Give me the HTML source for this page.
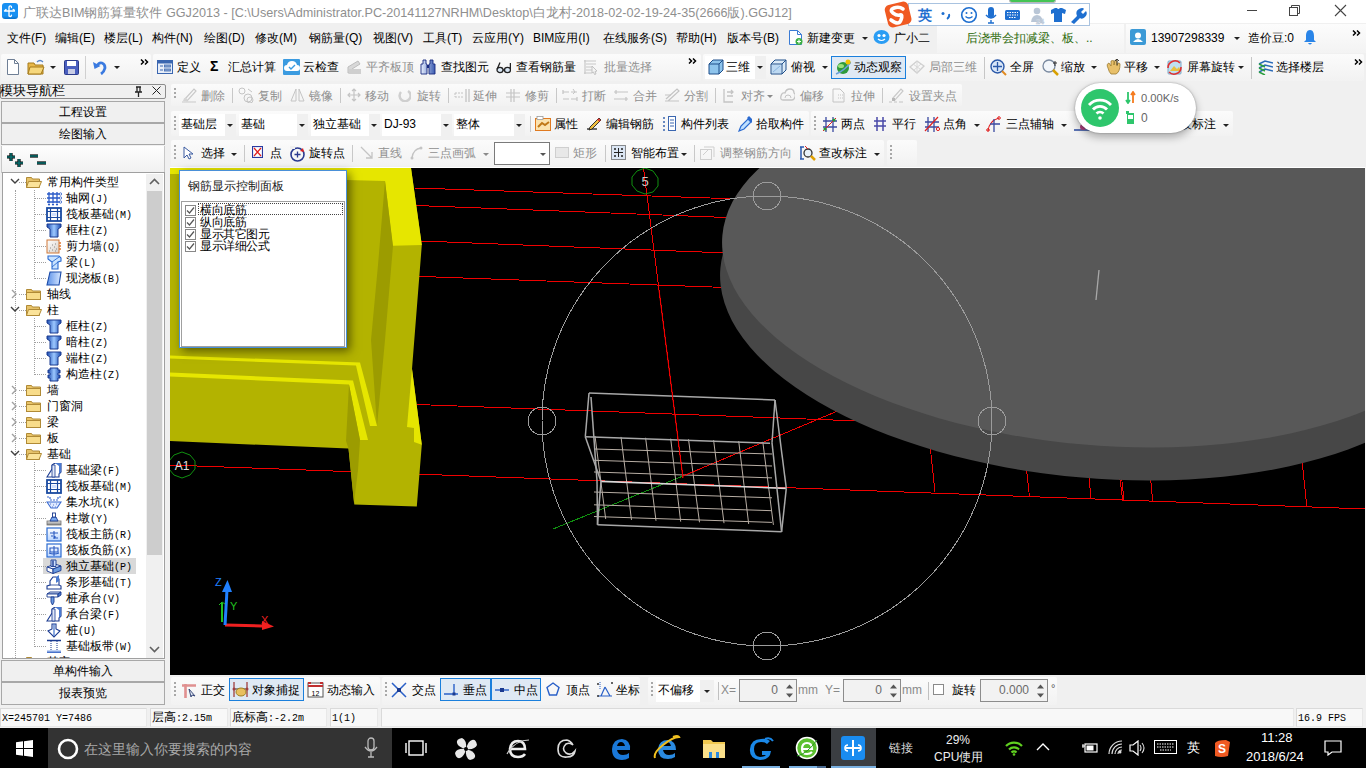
<!DOCTYPE html><html><head><meta charset="utf-8"><style>
*{margin:0;padding:0;box-sizing:border-box}
html,body{width:1366px;height:768px;overflow:hidden;background:#f0f0f0;font-family:"Liberation Sans",sans-serif;font-size:12px;color:#000;position:relative}
.a{position:absolute}
.t{position:absolute;white-space:nowrap;line-height:16px}
.dd{position:absolute;width:0;height:0;border-left:3px solid transparent;border-right:3px solid transparent;border-top:3px solid #222}
.m{font-family:"Liberation Mono",monospace}
</style></head><body>
<div class="a" style="left:0px;top:0px;width:1366px;height:23px;background:#fff"></div>
<div class="a" style="left:2px;top:3px;width:16px;height:16px;background:linear-gradient(#1890f2 80%,#0a6fc8);border-radius:3px"></div>
<svg class="a" style="left:2px;top:3px" width="16" height="16" viewBox="0 0 16 16"><g fill="none" stroke="#fff" stroke-width="1.3" stroke-linecap="round"><path d="M7 3.8v9.2M7 4.5q0-1.6 1.3-1.6t1.2 1.6M7 12q0 1.5 1.2 1.5t1.3-1.3M2.5 8h10M2.5 8l1.5-1.5M12.5 8q0-1.5-1.4-1.6"/></g></svg>
<div class="t " style="left:23px;top:5px;color:#8f8f8f;font-size:12.63px;">广联达BIM钢筋算量软件 GGJ2013 - [C:\Users\Administrator.PC-20141127NRHM\Desktop\白龙村-2018-02-02-19-24-35(2666版).GGJ12]</div>
<div class="a" style="left:1247px;top:10px;width:10px;height:1px;background:#444"></div>
<svg class="a" style="left:1288px;top:4px" width="14" height="14" viewBox="0 0 14 14"><rect x="1.5" y="3.5" width="8" height="8" fill="none" stroke="#444"/><path d="M3.5 3.5v-2h8v8h-2" fill="none" stroke="#444"/></svg>
<svg class="a" style="left:1334px;top:4px" width="13" height="13" viewBox="0 0 13 13"><path d="M1 1L12 12M12 1L1 12" stroke="#444" stroke-width="1.1"/></svg>
<div class="a" style="left:0px;top:23px;width:1366px;height:30px;background:#f0f0f0"></div>
<div class="t " style="left:7px;top:30px;color:#000;font-size:12px;">文件(F)</div>
<div class="t " style="left:55px;top:30px;color:#000;font-size:12px;">编辑(E)</div>
<div class="t " style="left:104px;top:30px;color:#000;font-size:12px;">楼层(L)</div>
<div class="t " style="left:152px;top:30px;color:#000;font-size:12px;">构件(N)</div>
<div class="t " style="left:204px;top:30px;color:#000;font-size:12px;">绘图(D)</div>
<div class="t " style="left:255px;top:30px;color:#000;font-size:12px;">修改(M)</div>
<div class="t " style="left:309px;top:30px;color:#000;font-size:12px;">钢筋量(Q)</div>
<div class="t " style="left:373px;top:30px;color:#000;font-size:12px;">视图(V)</div>
<div class="t " style="left:423px;top:30px;color:#000;font-size:12px;">工具(T)</div>
<div class="t " style="left:472px;top:30px;color:#000;font-size:12px;">云应用(Y)</div>
<div class="t " style="left:533px;top:30px;color:#000;font-size:12px;">BIM应用(I)</div>
<div class="t " style="left:603px;top:30px;color:#000;font-size:12px;">在线服务(S)</div>
<div class="t " style="left:676px;top:30px;color:#000;font-size:12px;">帮助(H)</div>
<div class="t " style="left:727px;top:30px;color:#000;font-size:12px;">版本号(B)</div>
<svg class="a" style="left:788px;top:29px" width="16" height="17" viewBox="0 0 16 17"><path d="M1.5 1.5h8l4 4v10h-12z" fill="#fff" stroke="#3a7bd5"/><path d="M9.5 1.5v4h4" fill="none" stroke="#3a7bd5"/><circle cx="11" cy="12.5" r="3.5" fill="#3cb043"/><path d="M9 12.5h4M11 10.5v4" stroke="#fff" stroke-width="1.2"/></svg>
<div class="t " style="left:807px;top:30px;color:#000;font-size:12px;">新建变更</div>
<div class="dd" style="left:862px;top:37px;border-top-color:#222"></div>
<svg class="a" style="left:873px;top:29px" width="17" height="16" viewBox="0 0 17 16"><ellipse cx="8.5" cy="8" rx="8" ry="7" fill="#2a9df4"/><circle cx="6" cy="6.5" r="1.6" fill="#fff"/><circle cx="11" cy="6.5" r="1.6" fill="#fff"/><path d="M5 10q3.5 3 7 0" stroke="#fff" fill="none" stroke-width="1.2"/></svg>
<div class="t " style="left:894px;top:30px;color:#000;font-size:12px;">广小二</div>
<div class="a" style="left:937px;top:24px;width:187px;height:29px;background:linear-gradient(#fcfcfc,#f3f3f3)"></div>
<div class="t " style="left:966px;top:30px;color:#2e6b0b;font-size:12px;">后浇带会扣减梁、板、..</div>
<div class="a" style="left:1126px;top:24px;width:240px;height:29px;background:linear-gradient(#fcfcfc,#f3f3f3)"></div>
<svg class="a" style="left:1130px;top:29px" width="16" height="16" viewBox="0 0 16 16"><rect width="16" height="16" rx="2" fill="#3c9ad6"/><circle cx="8" cy="6.5" r="3" fill="#fff"/><path d="M3 13q5-6 10 0z" fill="#fff"/></svg>
<div class="t " style="left:1151px;top:30px;color:#000;font-size:12px;">13907298339</div>
<div class="dd" style="left:1234px;top:37px;border-top-color:#222"></div>
<div class="t " style="left:1248px;top:30px;color:#000;font-size:12px;">造价豆:0</div>
<svg class="a" style="left:1303px;top:29px" width="14" height="17" viewBox="0 0 14 17"><path d="M7 1c-3 0-4 3-4 6v4l-2 2h12l-2-2v-4c0-3-1-6-4-6z" fill="#2a85e8"/><path d="M5 14q2 3 4 0" fill="#2a85e8"/></svg>
<svg class="a" style="left:1352px;top:30px" width="9" height="6" viewBox="0 0 9 6"><path d="M1 .5l2.5 2.5L1 5.5M5 .5l2.5 2.5L5 5.5" fill="none" stroke="#000" stroke-width="1.5"/></svg>
<div class="a" style="left:1009px;top:0px;width:47px;height:3px;background:#44c454;border:1px solid #b8b8b8;border-top:none;border-radius:0 0 6px 6px"></div>
<div class="a" style="left:908px;top:3px;width:182px;height:23px;background:#fff;border:1px solid #a9c3e0"></div>
<svg class="a" style="left:882px;top:0px" width="32" height="28" viewBox="0 0 32 28"><g transform="rotate(-14 16 14)"><rect x="4" y="3" width="24" height="23" rx="5" fill="#f05a22"/></g><path d="M21 9q-4-3-9-1t-1 5 7 2 1 5-10 0" fill="none" stroke="#fff" stroke-width="3.6" stroke-linecap="round"/></svg>
<svg class="a" style="left:916px;top:5px" width="174" height="20" viewBox="0 0 174 20"><text x="2" y="15" font-size="14" font-weight="bold" fill="#1e6fd0" font-family="Liberation Sans">英</text><circle cx="27" cy="8.5" r="1.5" fill="#1e6fd0"/><path d="M33 9q1 3-2 5" stroke="#1e6fd0" stroke-width="1.8" fill="none"/><circle cx="53" cy="10" r="7.3" fill="none" stroke="#1e6fd0" stroke-width="1.6"/><circle cx="50.5" cy="8" r="1" fill="#1e6fd0"/><circle cx="55.5" cy="8" r="1" fill="#1e6fd0"/><path d="M49.5 11.5q3.5 3 7 0" stroke="#1e6fd0" fill="none" stroke-width="1.3"/><rect x="72" y="2" width="6" height="11" rx="3" fill="#1e6fd0"/><path d="M70 10q5 6 10 0M75 15v3M72 18h6" stroke="#1e6fd0" fill="none" stroke-width="1.4"/><rect x="89" y="5" width="15" height="10" rx="1.5" fill="#1e6fd0"/><path d="M91 7.5h11M91 10h11M93 12.5h7" stroke="#fff" stroke-width="1" stroke-dasharray="1.5 1"/><circle cx="121" cy="6" r="3.3" fill="#b9c6d6"/><path d="M115 17q1-7 6-7t6 7z" fill="#b9c6d6"/><text x="120" y="19" font-size="7" font-weight="bold" fill="#fff" stroke="#b9c6d6" stroke-width=".6" font-family="Liberation Sans">24</text><path d="M135 5l4-2h2q1 2 3 0h2l4 2-1 4-3-1v9h-8v-9l-3 1z" fill="#1e6fd0"/><path d="M155 17l6-6q-2-5 2-7t5 0l-3 3 2 2 3-3q2 3-1 6t-5 1l-6 6z" fill="#1e6fd0"/></svg>
<div class="a" style="left:1px;top:54px;width:150px;height:27px;background:linear-gradient(#fbfbfb,#f2f2f2);border-radius:2px"></div>
<svg class="a" style="left:6px;top:59px" width="14" height="16" viewBox="0 0 14 16"><path d="M1.5 .5h7l4 4v11h-11z" fill="#fff" stroke="#6f7f95"/><path d="M8.5 .5v4h4" fill="none" stroke="#6f7f95"/></svg>
<svg class="a" style="left:27px;top:59px" width="18" height="16" viewBox="0 0 18 16"><path d="M1 4h6l1 2h8v9H1z" fill="#e8b84a" stroke="#a57b1c"/><path d="M3 8h14l-3 7H1z" fill="#f6d77c" stroke="#a57b1c"/><path d="M10 3q3-3 6 0" stroke="#5a86c8" fill="none" stroke-width="1.3"/></svg>
<div class="dd" style="left:50px;top:66px;border-top-color:#222"></div>
<svg class="a" style="left:64px;top:60px" width="15" height="15" viewBox="0 0 15 15"><rect x=".5" y=".5" width="14" height="14" rx="1" fill="#4a5fbf" stroke="#2b3a8a"/><rect x="3" y="1" width="9" height="5" fill="#fff"/><rect x="4" y="9" width="7" height="5" fill="#c9cde5"/></svg>
<div class="a" style="left:85px;top:56px;width:1px;height:23px;background:#d0d0d0"></div>
<svg class="a" style="left:92px;top:59px" width="15" height="16" viewBox="0 0 15 16"><path d="M5 7q2-4 5-3t3 5q-1 4-4 6" fill="none" stroke="#3a7ae0" stroke-width="2.8"/><path d="M1 3l1.5 7 6-3z" fill="#3a7ae0"/></svg>
<div class="dd" style="left:114px;top:66px;border-top-color:#222"></div>
<svg class="a" style="left:140px;top:59px" width="9" height="6" viewBox="0 0 9 6"><path d="M1 .5l2.5 2.5L1 5.5M5 .5l2.5 2.5L5 5.5" fill="none" stroke="#000" stroke-width="1.5"/></svg>
<div class="a" style="left:153px;top:54px;width:548px;height:27px;background:linear-gradient(#fbfbfb,#f2f2f2);border-radius:2px"></div>
<svg class="a" style="left:157px;top:60px" width="16" height="14" viewBox="0 0 16 14"><rect x=".5" y=".5" width="15" height="13" fill="#e8eef8" stroke="#3a66b0"/><rect x=".5" y=".5" width="15" height="3" fill="#3a66b0"/><path d="M3 6h3M3 10h3M8 6h5M8 10h5" stroke="#3a66b0"/><rect x="7.5" y="5" width="6" height="2" fill="none" stroke="#3a66b0" stroke-width=".8"/><rect x="7.5" y="9" width="6" height="2" fill="none" stroke="#3a66b0" stroke-width=".8"/></svg>
<div class="t " style="left:177px;top:59px;color:#000;font-size:12px;">定义</div>
<div class="t " style="left:210px;top:58px;color:#000;font-size:14px;font-weight:bold">Σ</div>
<div class="t " style="left:228px;top:59px;color:#000;font-size:12px;">汇总计算</div>
<svg class="a" style="left:283px;top:59px" width="17" height="16" viewBox="0 0 17 16"><rect width="17" height="16" rx="1" fill="#3b9be0"/><path d="M4 12q-3 0-3-3t3-3q1-4 5-4t5 4q3 0 3 3t-3 3z" fill="#fff"/><path d="M6 8l2 2 4-4" stroke="#3b9be0" fill="none" stroke-width="1.4"/></svg>
<div class="t " style="left:303px;top:59px;color:#000;font-size:12px;">云检查</div>
<svg class="a" style="left:346px;top:59px" width="16" height="16" viewBox="0 0 16 16"><path d="M2 14V8l10-6 2 3-8 5v4z" fill="#d8d8d8" stroke="#bdbdbd"/><rect x="3" y="10" width="12" height="5" fill="#cfcfcf"/></svg>
<div class="t " style="left:366px;top:59px;color:#8f8f8f;font-size:12px;">平齐板顶</div>
<svg class="a" style="left:420px;top:59px" width="16" height="16" viewBox="0 0 16 16"><defs><linearGradient id="bn" x1="0" x2="1"><stop offset="0" stop-color="#e8f0ff"/><stop offset="1" stop-color="#3a5ab0"/></linearGradient></defs><path d="M3 1h3v4h1v10H1V5h2zM10 1h3v4h2v10H9V5h1z" fill="url(#bn)" stroke="#1a2a80" stroke-width=".9"/><rect x="7" y="6" width="2" height="3" fill="#1a2a80"/></svg>
<div class="t " style="left:441px;top:59px;color:#000;font-size:12px;">查找图元</div>
<svg class="a" style="left:496px;top:60px" width="15" height="14" viewBox="0 0 15 14"><ellipse cx="4" cy="10" rx="3" ry="2.6" fill="#d8e6f4" stroke="#222" stroke-width="1.3"/><ellipse cx="11.5" cy="10" rx="3" ry="2.6" fill="#d8e6f4" stroke="#222" stroke-width="1.3"/><path d="M7 10h1.5M1.2 9L4 2.5M14.4 9V3" fill="none" stroke="#222" stroke-width="1.3"/></svg>
<div class="t " style="left:516px;top:59px;color:#000;font-size:12px;">查看钢筋量</div>
<svg class="a" style="left:583px;top:59px" width="16" height="16" viewBox="0 0 16 16"><path d="M1 2h12M3 5h10M3 8h6M3 11h6M1 14h8M2 1v14" stroke="#c8c8c8" stroke-width="1.2"/><path d="M9 7l5 5-2 .5 1 2.5-1.5.5-1-2.5L9 14z" fill="#f4f4f4" stroke="#bdbdbd" stroke-width=".9"/></svg>
<div class="t " style="left:604px;top:59px;color:#8f8f8f;font-size:12px;">批量选择</div>
<svg class="a" style="left:688px;top:58px" width="9" height="6" viewBox="0 0 9 6"><path d="M1 .5l2.5 2.5L1 5.5M5 .5l2.5 2.5L5 5.5" fill="none" stroke="#000" stroke-width="1.5"/></svg>
<div class="a" style="left:703px;top:54px;width:661px;height:27px;background:linear-gradient(#fbfbfb,#f2f2f2);border-radius:2px"></div>
<div class="a" style="left:705px;top:56px;width:61px;height:23px;background:#fff"></div>
<div class="a" style="left:755px;top:56px;width:11px;height:23px;background:#f0f0f0"></div>
<svg class="a" style="left:708px;top:59px" width="16" height="16" viewBox="0 0 16 16"><path d="M1 5l4-4h10v10l-4 4H1z" fill="#8ec4ec" stroke="#1f4f8a"/><path d="M1 5h10v10M11 5l4-4" fill="none" stroke="#1f4f8a"/></svg>
<div class="t " style="left:726px;top:59px;color:#000;font-size:12px;">三维</div>
<div class="dd" style="left:757px;top:66px;border-top-color:#222"></div>
<svg class="a" style="left:770px;top:59px" width="17" height="16" viewBox="0 0 17 16"><path d="M1 5l4-4h11v10l-4 4H1z" fill="#dbeaf7" stroke="#1f4f8a"/><path d="M1 5h11v10M12 5l4-4" fill="none" stroke="#1f4f8a"/><path d="M3 13l7-6" stroke="#5b8fc7"/><rect x="2" y="6" width="9" height="8" fill="#a9cdee" opacity=".6"/></svg>
<div class="t " style="left:791px;top:59px;color:#000;font-size:12px;">俯视</div>
<div class="dd" style="left:822px;top:66px;border-top-color:#222"></div>
<div class="a" style="left:831px;top:56px;width:75px;height:23px;background:#dfe9f4;border:1px solid #1a7fdc"></div>
<svg class="a" style="left:835px;top:59px" width="16" height="16" viewBox="0 0 16 16"><ellipse cx="8" cy="9" rx="6" ry="6" fill="#2e9a3a"/><ellipse cx="6" cy="7" rx="3" ry="2" fill="#9de07a"/><path d="M1 15q8-3 15-12" stroke="#6aa0d8" stroke-width="1.5" fill="none"/><circle cx="13" cy="3" r="2.5" fill="#f2c200"/></svg>
<div class="t " style="left:854px;top:59px;color:#000;font-size:12px;">动态观察</div>
<svg class="a" style="left:909px;top:59px" width="16" height="16" viewBox="0 0 16 16"><path d="M1 8l7-6 7 5-7 7z" fill="none" stroke="#cfcfcf" stroke-width="1.3"/><path d="M4 5l7 5M8 2v12M12 5l-7 6" stroke="#d8d8d8"/></svg>
<div class="t " style="left:929px;top:59px;color:#8f8f8f;font-size:12px;">局部三维</div>
<div class="a" style="left:984px;top:57px;width:1px;height:22px;background:#c6c6c6"></div>
<svg class="a" style="left:990px;top:59px" width="17" height="17" viewBox="0 0 17 17"><circle cx="7.5" cy="7.5" r="6.5" fill="#d8e6f8" stroke="#2a58a8" stroke-width="1.4"/><path d="M7.5 3v9M3 7.5h9" stroke="#2a58a8" stroke-width="1.3"/><path d="M12 12l4 4" stroke="#e08a20" stroke-width="2"/></svg>
<div class="t " style="left:1010px;top:59px;color:#000;font-size:12px;">全屏</div>
<svg class="a" style="left:1042px;top:59px" width="17" height="17" viewBox="0 0 17 17"><circle cx="7" cy="7" r="6" fill="#f2f6fb" stroke="#7a8aa0" stroke-width="1.3"/><path d="M11 11l5 5" stroke="#d8a000" stroke-width="2.5"/><path d="M13 2v5M11 4h4" stroke="#333"/></svg>
<div class="t " style="left:1061px;top:59px;color:#000;font-size:12px;">缩放</div>
<div class="dd" style="left:1091px;top:66px;border-top-color:#222"></div>
<svg class="a" style="left:1105px;top:58px" width="16" height="18" viewBox="0 0 16 18"><path d="M3 10q-2-4 1-5l2 3V3q2-1 3 0v4l1-5q2 0 2 1v5l1-3q2 0 2 1q0 8-4 10H6q-2-2-3-6z" fill="#e8c06a" stroke="#9a7a30" stroke-width=".8"/><path d="M12 1v6M10 3l2-2 2 2" stroke="#333" stroke-width=".9" fill="none"/></svg>
<div class="t " style="left:1124px;top:59px;color:#000;font-size:12px;">平移</div>
<div class="dd" style="left:1154px;top:66px;border-top-color:#222"></div>
<svg class="a" style="left:1166px;top:59px" width="17" height="17" viewBox="0 0 17 17"><rect x="2" y="2" width="13" height="13" rx="1" fill="#bfe0f0" stroke="#7aa8c8"/><path d="M4 12l4-5 3 3 2-2 2 4z" fill="#e8c040"/><path d="M2 9a7 7 0 0 1 12-5M15 8a7 7 0 0 1-12 5" fill="none" stroke="#e03030" stroke-width="1.6"/></svg>
<div class="t " style="left:1187px;top:59px;color:#000;font-size:12px;">屏幕旋转</div>
<div class="dd" style="left:1238px;top:66px;border-top-color:#222"></div>
<div class="a" style="left:1251px;top:57px;width:1px;height:22px;background:#c6c6c6"></div>
<svg class="a" style="left:1258px;top:60px" width="15" height="15" viewBox="0 0 15 15"><path d="M1 4l6-3 8 2M1 8l6-3 8 2M1 12l6-3 8 2" fill="none" stroke="#2a6ab8" stroke-width="1.6"/><path d="M1 4l6 3M1 8l6 3M1 12l6 3" stroke="#2ea040" stroke-width="1.6"/></svg>
<div class="t " style="left:1276px;top:59px;color:#000;font-size:12px;">选择楼层</div>
<svg class="a" style="left:1354px;top:59px" width="9" height="6" viewBox="0 0 9 6"><path d="M1 .5l2.5 2.5L1 5.5M5 .5l2.5 2.5L5 5.5" fill="none" stroke="#000" stroke-width="1.5"/></svg>
<div class="a" style="left:171px;top:84px;width:791px;height:22px;background:linear-gradient(#fbfbfb,#f2f2f2);border-radius:2px"></div>
<div class="a" style="left:174px;top:88px;width:2px;height:2px;background:#a8a8a8"></div>
<div class="a" style="left:174px;top:92px;width:2px;height:2px;background:#a8a8a8"></div>
<div class="a" style="left:174px;top:96px;width:2px;height:2px;background:#a8a8a8"></div>
<svg class="a" style="left:181px;top:87px" width="16" height="16" viewBox="0 0 16 16"><path d="M4 12l9-10 2 2-9 10z" fill="none" stroke="#c9c9c9" stroke-width="1.2"/><path d="M1 15h14" stroke="#c9c9c9"/><path d="M2 14q1-4 3-3l2 2q-1 2-5 1z" fill="#d5d5d5"/></svg>
<div class="t " style="left:201px;top:88px;color:#8f8f8f;font-size:12px;">删除</div>
<div class="a" style="left:232px;top:88px;width:1px;height:15px;background:#c8c8c8"></div>
<svg class="a" style="left:238px;top:87px" width="16" height="16" viewBox="0 0 16 16"><circle cx="4" cy="4" r="3" fill="none" stroke="#c4c4c4"/><circle cx="10" cy="11" r="4" fill="none" stroke="#c4c4c4"/><circle cx="12" cy="13" r="3" fill="none" stroke="#c4c4c4"/><path d="M10 2l4 3" stroke="#c4c4c4"/></svg>
<div class="t " style="left:258px;top:88px;color:#8f8f8f;font-size:12px;">复制</div>
<svg class="a" style="left:290px;top:87px" width="15" height="16" viewBox="0 0 15 16"><path d="M6 2L1 14h5zM9 2l5 12H9z" fill="none" stroke="#c4c4c4"/></svg>
<div class="t " style="left:309px;top:88px;color:#8f8f8f;font-size:12px;">镜像</div>
<div class="a" style="left:340px;top:88px;width:1px;height:15px;background:#c8c8c8"></div>
<svg class="a" style="left:347px;top:88px" width="14" height="14" viewBox="0 0 14 14"><path d="M7 1v12M1 7h12M5 3l2-2 2 2M5 11l2 2 2-2M3 5L1 7l2 2M11 5l2 2-2 2" fill="none" stroke="#c4c4c4" stroke-width="1.2"/></svg>
<div class="t " style="left:365px;top:88px;color:#8f8f8f;font-size:12px;">移动</div>
<svg class="a" style="left:398px;top:88px" width="13" height="14" viewBox="0 0 13 14"><path d="M10 3a5.5 5.5 0 1 1-7 1" fill="none" stroke="#cfcfcf" stroke-width="2.5"/></svg>
<div class="t " style="left:417px;top:88px;color:#8f8f8f;font-size:12px;">旋转</div>
<div class="a" style="left:448px;top:88px;width:1px;height:15px;background:#c8c8c8"></div>
<svg class="a" style="left:454px;top:88px" width="16" height="14" viewBox="0 0 16 14"><path d="M1 5h8M1 9h8M1 5v4" stroke="#c4c4c4" stroke-dasharray="2 1"/><path d="M12 1v13M15 1v13" stroke="#c4c4c4" stroke-width="1.3"/></svg>
<div class="t " style="left:473px;top:88px;color:#8f8f8f;font-size:12px;">延伸</div>
<svg class="a" style="left:505px;top:88px" width="16" height="14" viewBox="0 0 16 14"><path d="M6 1v13M9 1v13M1 5h14M1 9h14" stroke="#c4c4c4" stroke-width="1.2"/></svg>
<div class="t " style="left:525px;top:88px;color:#8f8f8f;font-size:12px;">修剪</div>
<div class="a" style="left:556px;top:88px;width:1px;height:15px;background:#c8c8c8"></div>
<svg class="a" style="left:562px;top:88px" width="16" height="14" viewBox="0 0 16 14"><path d="M1 4h6M9 4h6M1 11h6M9 11h6M1 2v4M15 9v4" stroke="#c4c4c4" stroke-width="1.2"/><path d="M11 1l2 3-2 2" stroke="#c4c4c4" fill="none"/></svg>
<div class="t " style="left:582px;top:88px;color:#8f8f8f;font-size:12px;">打断</div>
<svg class="a" style="left:613px;top:88px" width="16" height="14" viewBox="0 0 16 14"><path d="M1 4h14M1 11h14M3 2v4M13 9v4" stroke="#c4c4c4" stroke-width="1.2"/></svg>
<div class="t " style="left:633px;top:88px;color:#8f8f8f;font-size:12px;">合并</div>
<svg class="a" style="left:664px;top:87px" width="16" height="16" viewBox="0 0 16 16"><path d="M1 14h14M2 12l11-10 2 2-11 10" fill="none" stroke="#c4c4c4" stroke-width="1.2"/><path d="M1 8h6" stroke="#c4c4c4"/></svg>
<div class="t " style="left:684px;top:88px;color:#8f8f8f;font-size:12px;">分割</div>
<div class="a" style="left:715px;top:88px;width:1px;height:15px;background:#c8c8c8"></div>
<svg class="a" style="left:722px;top:88px" width="12" height="15" viewBox="0 0 12 15"><path d="M2 1v13h9M5 4h6M5 8h6M9 2l2 2-2 2" fill="none" stroke="#c4c4c4" stroke-width="1.3"/></svg>
<div class="t " style="left:741px;top:88px;color:#8f8f8f;font-size:12px;">对齐</div>
<div class="dd" style="left:767px;top:95px;border-top-color:#8a8a8a"></div>
<svg class="a" style="left:780px;top:88px" width="15" height="14" viewBox="0 0 15 14"><path d="M3 12q-3 0-2-4t4-3q1-4 5-4t4 4q2 1 1 4t-3 3z" fill="none" stroke="#c4c4c4" stroke-width="1.3"/><path d="M5 10q0-3 3-3t3 3" fill="none" stroke="#c4c4c4"/></svg>
<div class="t " style="left:800px;top:88px;color:#8f8f8f;font-size:12px;">偏移</div>
<svg class="a" style="left:832px;top:88px" width="14" height="15" viewBox="0 0 14 15"><path d="M1 1h7l4 4v9H1z" fill="none" stroke="#c4c4c4"/><path d="M6 7h5M6 10h5" stroke="#c4c4c4" stroke-dasharray="1 1"/></svg>
<div class="t " style="left:851px;top:88px;color:#8f8f8f;font-size:12px;">拉伸</div>
<div class="a" style="left:882px;top:88px;width:1px;height:15px;background:#c8c8c8"></div>
<svg class="a" style="left:888px;top:87px" width="16" height="16" viewBox="0 0 16 16"><path d="M5 11l8-9 2 2-8 9z" fill="none" stroke="#c9c9c9" stroke-width="1.2"/><path d="M1 15h3M6 15h3M11 15h4" stroke="#c4c4c4"/><rect x="4" y="11" width="3" height="3" fill="#b8b8b8"/></svg>
<div class="t " style="left:909px;top:88px;color:#8f8f8f;font-size:12px;">设置夹点</div>
<div class="a" style="left:171px;top:111px;width:638px;height:25px;background:linear-gradient(#fbfbfb,#f2f2f2);border-radius:2px"></div>
<div class="a" style="left:174px;top:116px;width:2px;height:2px;background:#a8a8a8"></div>
<div class="a" style="left:174px;top:120px;width:2px;height:2px;background:#a8a8a8"></div>
<div class="a" style="left:174px;top:124px;width:2px;height:2px;background:#a8a8a8"></div>
<div class="a" style="left:174px;top:128px;width:2px;height:2px;background:#a8a8a8"></div>
<div class="a" style="left:179px;top:114px;width:57px;height:22px;background:#fff"></div>
<div class="a" style="left:225px;top:114px;width:11px;height:22px;background:#f0f0f0"></div>
<div class="t " style="left:181px;top:116px;color:#000;font-size:12px;">基础层</div>
<div class="dd" style="left:227px;top:124px;border-top-color:#222"></div>
<div class="a" style="left:239px;top:114px;width:69px;height:22px;background:#fff"></div>
<div class="a" style="left:297px;top:114px;width:11px;height:22px;background:#f0f0f0"></div>
<div class="t " style="left:241px;top:116px;color:#000;font-size:12px;">基础</div>
<div class="dd" style="left:299px;top:124px;border-top-color:#222"></div>
<div class="a" style="left:311px;top:114px;width:69px;height:22px;background:#fff"></div>
<div class="a" style="left:369px;top:114px;width:11px;height:22px;background:#f0f0f0"></div>
<div class="t " style="left:313px;top:116px;color:#000;font-size:12px;">独立基础</div>
<div class="dd" style="left:371px;top:124px;border-top-color:#222"></div>
<div class="a" style="left:382px;top:114px;width:70px;height:22px;background:#fff"></div>
<div class="a" style="left:441px;top:114px;width:11px;height:22px;background:#f0f0f0"></div>
<div class="t " style="left:384px;top:116px;color:#000;font-size:12px;">DJ-93</div>
<div class="dd" style="left:443px;top:124px;border-top-color:#222"></div>
<div class="a" style="left:454px;top:114px;width:71px;height:22px;background:#fff"></div>
<div class="a" style="left:514px;top:114px;width:11px;height:22px;background:#f0f0f0"></div>
<div class="t " style="left:456px;top:116px;color:#000;font-size:12px;">整体</div>
<div class="dd" style="left:516px;top:124px;border-top-color:#222"></div>
<div class="a" style="left:530px;top:116px;width:1px;height:16px;background:#c8c8c8"></div>
<svg class="a" style="left:535px;top:116px" width="16" height="15" viewBox="0 0 16 15"><rect x=".5" y="2.5" width="15" height="12" fill="#fbe3b0" stroke="#e07a20"/><rect x="2" y=".5" width="6" height="3" fill="#fff" stroke="#999" stroke-width=".8"/><path d="M3 11l4-4 3 2 4-3" stroke="#c07818" stroke-width="2" fill="none"/></svg>
<div class="t " style="left:554px;top:116px;color:#000;font-size:12px;">属性</div>
<svg class="a" style="left:586px;top:116px" width="16" height="15" viewBox="0 0 16 15"><path d="M1 13h10" stroke="#222" stroke-width="1.3"/><path d="M4 11l9-9 2 2-9 9-3 1z" fill="#f2c040" stroke="#222" stroke-width=".9"/><path d="M12 3l2 2" stroke="#e03030" stroke-width="2"/></svg>
<div class="t " style="left:606px;top:116px;color:#000;font-size:12px;">编辑钢筋</div>
<svg class="a" style="left:662px;top:116px" width="14" height="15" viewBox="0 0 14 15"><path d="M1 2h2M1 6h2M1 10h2M1 14h2" stroke="#3a66b0" stroke-width="1.5"/><rect x="6.5" y=".5" width="7" height="14" fill="#fff" stroke="#3a66b0"/><path d="M8 4h4M8 7h4M8 10h4" stroke="#3a66b0"/></svg>
<div class="t " style="left:681px;top:116px;color:#000;font-size:12px;">构件列表</div>
<svg class="a" style="left:738px;top:116px" width="14" height="16" viewBox="0 0 14 16"><path d="M1 15l2-5 7-7 3 3-7 7z" fill="#bfe0ff" stroke="#2a6ad0" stroke-width="1.2"/><path d="M9 2l2-2 5 5-2 2" fill="#2a6ad0"/></svg>
<div class="t " style="left:756px;top:116px;color:#000;font-size:12px;">拾取构件</div>
<div class="a" style="left:811px;top:111px;width:422px;height:25px;background:linear-gradient(#fbfbfb,#f2f2f2);border-radius:2px"></div>
<div class="a" style="left:814px;top:116px;width:2px;height:2px;background:#a8a8a8"></div>
<div class="a" style="left:814px;top:120px;width:2px;height:2px;background:#a8a8a8"></div>
<div class="a" style="left:814px;top:124px;width:2px;height:2px;background:#a8a8a8"></div>
<div class="a" style="left:814px;top:128px;width:2px;height:2px;background:#a8a8a8"></div>
<svg class="a" style="left:822px;top:116px" width="15" height="16" viewBox="0 0 15 16"><path d="M4 1v15M11 1v15M1 5h14M1 11h14" stroke="#3a4aa0" stroke-width="1.3"/><path d="M1 15L14 2" stroke="#e02020"/><circle cx="3" cy="13" r="1.6" fill="#2a9a30"/><circle cx="12" cy="4" r="1.6" fill="#2a9a30"/></svg>
<div class="t " style="left:841px;top:116px;color:#000;font-size:12px;">两点</div>
<svg class="a" style="left:873px;top:116px" width="14" height="15" viewBox="0 0 14 15"><path d="M4 1v14M10 1v14M1 5h12M1 10h12" stroke="#4a4aa8" stroke-width="1.5"/></svg>
<div class="t " style="left:892px;top:116px;color:#000;font-size:12px;">平行</div>
<svg class="a" style="left:924px;top:116px" width="16" height="16" viewBox="0 0 16 16"><path d="M4 1v15M10 1v15M1 6h14M1 11h14" stroke="#3a4aa0" stroke-width="1.3"/><path d="M1 15L14 1" stroke="#e02020" stroke-width="1.2"/><circle cx="14" cy="13" r="1.6" fill="none" stroke="#e02020"/></svg>
<div class="t " style="left:943px;top:116px;color:#000;font-size:12px;">点角</div>
<div class="dd" style="left:974px;top:124px;border-top-color:#222"></div>
<svg class="a" style="left:986px;top:116px" width="15" height="16" viewBox="0 0 15 16"><path d="M2 15q1-10 11-13" fill="none" stroke="#e02020" stroke-width="1.2"/><path d="M8 3v13M4 8h10" stroke="#3a4aa0" stroke-width="1.3"/><circle cx="2" cy="14" r="1.3" fill="none" stroke="#e02020"/><circle cx="13" cy="2" r="1.3" fill="none" stroke="#e02020"/></svg>
<div class="t " style="left:1006px;top:116px;color:#000;font-size:12px;">三点辅轴</div>
<div class="dd" style="left:1061px;top:124px;border-top-color:#222"></div>
<svg class="a" style="left:1073px;top:118px" width="20" height="14" viewBox="0 0 20 14"><path d="M1 12h16" stroke="#2a4aa0" stroke-width="1.5"/><circle cx="10" cy="9" r="3" fill="#b04080"/></svg>
<div class="t " style="left:1180px;top:116px;color:#000;font-size:12px;">改标注</div>
<div class="dd" style="left:1223px;top:124px;border-top-color:#222"></div>
<div class="a" style="left:171px;top:140px;width:713px;height:26px;background:linear-gradient(#fbfbfb,#f2f2f2);border-radius:2px"></div>
<div class="a" style="left:174px;top:145px;width:2px;height:2px;background:#a8a8a8"></div>
<div class="a" style="left:174px;top:149px;width:2px;height:2px;background:#a8a8a8"></div>
<div class="a" style="left:174px;top:153px;width:2px;height:2px;background:#a8a8a8"></div>
<div class="a" style="left:174px;top:157px;width:2px;height:2px;background:#a8a8a8"></div>
<svg class="a" style="left:183px;top:146px" width="10" height="14" viewBox="0 0 10 14"><path d="M1 1v11l3-3 2 4 2-1-2-4h4z" fill="#fff" stroke="#3a5aa0"/></svg>
<div class="t " style="left:201px;top:145px;color:#000;font-size:12px;">选择</div>
<div class="dd" style="left:231px;top:153px;border-top-color:#222"></div>
<div class="a" style="left:244px;top:145px;width:1px;height:17px;background:#c8c8c8"></div>
<svg class="a" style="left:252px;top:146px" width="11" height="12" viewBox="0 0 11 12"><rect x=".5" y=".5" width="10" height="11" fill="#fff" stroke="#2a3aa0" stroke-width="1.2"/><path d="M2 2l7 8M9 2l-7 8" stroke="#e02020" stroke-width="1.2"/></svg>
<div class="t " style="left:270px;top:145px;color:#000;font-size:12px;">点</div>
<svg class="a" style="left:289px;top:145px" width="17" height="17" viewBox="0 0 17 17"><circle cx="8.5" cy="9.5" r="6.5" fill="none" stroke="#2a3a90" stroke-width="1.6"/><path d="M8.5 6.5v6M5.5 9.5h6" stroke="#2a3a90" stroke-width="1.3"/><path d="M14 3l1 4-4-1" fill="#e02020"/><rect x="1" y="1" width="5" height="3" fill="#f0f0f0"/></svg>
<div class="t " style="left:309px;top:145px;color:#000;font-size:12px;">旋转点</div>
<div class="a" style="left:352px;top:145px;width:1px;height:17px;background:#c8c8c8"></div>
<svg class="a" style="left:360px;top:146px" width="13" height="13" viewBox="0 0 13 13"><path d="M1 1l11 11M12 6v6H6" fill="none" stroke="#c4c4c4" stroke-width="1.3"/></svg>
<div class="t " style="left:378px;top:145px;color:#8f8f8f;font-size:12px;">直线</div>
<svg class="a" style="left:410px;top:146px" width="13" height="14" viewBox="0 0 13 14"><path d="M2 12q1-9 9-10" fill="none" stroke="#c4c4c4" stroke-width="1.3"/><circle cx="2" cy="12" r="1.5" fill="#c4c4c4"/><circle cx="11" cy="2" r="1.5" fill="#c4c4c4"/></svg>
<div class="t " style="left:428px;top:145px;color:#8f8f8f;font-size:12px;">三点画弧</div>
<div class="dd" style="left:483px;top:153px;border-top-color:#8a8a8a"></div>
<div class="a" style="left:494px;top:142px;width:56px;height:23px;background:#fff;border:1px solid #7a7a7a"></div>
<div class="dd" style="left:540px;top:153px;border-top-color:#555"></div>
<svg class="a" style="left:555px;top:147px" width="14" height="11" viewBox="0 0 14 11"><rect x=".5" y=".5" width="13" height="10" fill="#e8e8e8" stroke="#cfcfcf"/></svg>
<div class="t " style="left:573px;top:145px;color:#8f8f8f;font-size:12px;">矩形</div>
<div class="a" style="left:605px;top:145px;width:1px;height:17px;background:#c8c8c8"></div>
<svg class="a" style="left:611px;top:145px" width="15" height="15" viewBox="0 0 15 15"><rect x=".5" y=".5" width="14" height="14" fill="#dbe6f4" stroke="#222" stroke-dasharray="1 1"/><path d="M7.5 3v9M3 7.5h9" stroke="#222"/><circle cx="4" cy="4" r="1" fill="#222"/><circle cx="11" cy="11" r="1" fill="#222"/><circle cx="11" cy="4" r="1" fill="#222"/><circle cx="4" cy="11" r="1" fill="#222"/></svg>
<div class="t " style="left:631px;top:145px;color:#000;font-size:12px;">智能布置</div>
<div class="dd" style="left:681px;top:153px;border-top-color:#222"></div>
<div class="a" style="left:694px;top:145px;width:1px;height:17px;background:#c8c8c8"></div>
<svg class="a" style="left:700px;top:146px" width="15" height="14" viewBox="0 0 15 14"><rect x=".5" y="3.5" width="11" height="10" fill="none" stroke="#cfcfcf"/><path d="M4 1h10v10" fill="none" stroke="#cfcfcf"/><path d="M3 9l5-5" stroke="#cfcfcf"/></svg>
<div class="t " style="left:720px;top:145px;color:#8f8f8f;font-size:12px;">调整钢筋方向</div>
<svg class="a" style="left:799px;top:145px" width="17" height="17" viewBox="0 0 17 17"><path d="M1 2h4M1 14h4M2 2v12" stroke="#2a5ab0" stroke-width="1.5"/><circle cx="9" cy="8" r="4" fill="#e8f2fb" stroke="#333" stroke-width="1.3"/><path d="M12 11l4 4" stroke="#e0a000" stroke-width="2.5"/><path d="M6 1l3 3" stroke="#e02020"/></svg>
<div class="t " style="left:819px;top:145px;color:#000;font-size:12px;">查改标注</div>
<div class="dd" style="left:874px;top:153px;border-top-color:#222"></div>
<div class="a" style="left:887px;top:140px;width:30px;height:26px;background:linear-gradient(#fbfbfb,#f2f2f2);border-radius:2px"></div>
<div class="a" style="left:890px;top:145px;width:2px;height:2px;background:#a8a8a8"></div>
<div class="a" style="left:890px;top:149px;width:2px;height:2px;background:#a8a8a8"></div>
<div class="a" style="left:890px;top:153px;width:2px;height:2px;background:#a8a8a8"></div>
<div class="a" style="left:890px;top:157px;width:2px;height:2px;background:#a8a8a8"></div>
<div class="a" style="left:1075px;top:83px;width:121px;height:50px;background:#fff;border-radius:25px;box-shadow:0 4px 8px rgba(0,0,0,.3),0 0 2px rgba(0,0,0,.35)"></div>
<svg class="a" style="left:1081px;top:89px" width="38" height="38" viewBox="0 0 38 38"><circle cx="19" cy="19" r="19" fill="#2ec66c"/><path d="M8 16a15 15 0 0 1 22 0" fill="none" stroke="#fff" stroke-width="2.8"/><path d="M12 20.5a9.5 9.5 0 0 1 14 0" fill="none" stroke="#fff" stroke-width="2.8"/><path d="M15.5 24.5a5 5 0 0 1 7 0" fill="none" stroke="#fff" stroke-width="2.8"/><circle cx="19" cy="29" r="1.8" fill="#fff"/></svg>
<svg class="a" style="left:1125px;top:91px" width="11" height="13" viewBox="0 0 11 13"><path d="M3 1v11M1 9l2 3 2-3" stroke="#2ec66c" stroke-width="1.8" fill="none"/><path d="M8 12V1M6 4l2-3 2 3" stroke="#f57b20" stroke-width="1.8" fill="none"/></svg>
<div class="t " style="left:1141px;top:90px;color:#666;font-size:11.2px;">0.00K/s</div>
<svg class="a" style="left:1125px;top:111px" width="10" height="13" viewBox="0 0 10 13"><rect x="2" y="2" width="7" height="11" fill="#2ec66c"/><rect x="1" y="0" width="3" height="3" fill="#2ec66c"/><rect x="3" y="4" width="5" height="4" fill="#fff"/></svg>
<div class="t " style="left:1141px;top:110px;color:#666;font-size:12px;">0</div>
<div class="a" style="left:0px;top:84px;width:166px;height:15px;background:#f0f0f0;border:1px solid #8c8c8c;border-radius:2px"></div>
<div class="t " style="left:0px;top:83px;color:#000;font-size:12.6px;">模块导航栏</div>
<svg class="a" style="left:134px;top:86px" width="9" height="11" viewBox="0 0 9 11"><path d="M2 1h5M3 1v5M6 1v5M1 6h7M4.5 6v5" stroke="#222" stroke-width="1.3"/></svg>
<svg class="a" style="left:152px;top:86px" width="9" height="9" viewBox="0 0 9 9"><path d="M.5 .5l8 8M8.5 .5l-8 8" stroke="#222" stroke-width="1"/></svg>
<div class="a" style="left:1px;top:101px;width:164px;height:22px;background:#f0f0f0;border:1px solid #a8a8a8"></div>
<div class="t" style="left:1px;width:164px;text-align:center;top:104px">工程设置</div>
<div class="a" style="left:1px;top:123px;width:164px;height:22px;background:#f0f0f0;border:1px solid #a8a8a8"></div>
<div class="t" style="left:1px;width:164px;text-align:center;top:126px">绘图输入</div>
<div class="a" style="left:1px;top:146px;width:164px;height:27px;background:linear-gradient(#fefefe,#f0f0f0);border-left:1px solid #c8c8c8;border-right:1px solid #c8c8c8"></div>
<svg class="a" style="left:6px;top:152px" width="18" height="16" viewBox="0 0 18 16"><path d="M1 5h8M5 1v8" stroke="#000" stroke-width="3.2"/><path d="M1 5h8M5 1v8" stroke="#0a6e6e" stroke-width="1.6"/><path d="M9 11h8M13 7v8" stroke="#000" stroke-width="3.2"/><path d="M9 11h8M13 7v8" stroke="#0a6e6e" stroke-width="1.6"/></svg>
<svg class="a" style="left:29px;top:153px" width="18" height="13" viewBox="0 0 18 13"><path d="M1 3h8" stroke="#000" stroke-width="3.2"/><path d="M1 3h8" stroke="#0a6e6e" stroke-width="1.6"/><path d="M8 10h9" stroke="#000" stroke-width="3.2"/><path d="M8 10h9" stroke="#0a6e6e" stroke-width="1.6"/></svg>
<div class="a" style="left:2px;top:172px;width:163px;height:487px;background:#fff;border:1px solid #a0a0a0"></div>
<div class="a" style="left:146px;top:174px;width:17px;height:484px;background:#f0f0f0"></div>
<div class="a" style="left:147px;top:191px;width:15px;height:364px;background:#cdcdcd"></div>
<svg class="a" style="left:148px;top:177px" width="13" height="10" viewBox="0 0 13 10"><path d="M2 7l4.5-4.5L11 7" fill="none" stroke="#606060" stroke-width="1.6"/></svg>
<svg class="a" style="left:148px;top:644px" width="13" height="10" viewBox="0 0 13 10"><path d="M2 3l4.5 4.5L11 3" fill="none" stroke="#606060" stroke-width="1.6"/></svg>
<div class="a" style="left:3px;top:173px;width:143px;height:485px;overflow:hidden">
<div class="a" style="left:40px;top:385px;width:93px;height:16px;background:#d9d9d9"></div>
<div class="a" style="left:12px;top:17px;width:1px;height:472px;border-left:1px dotted #a0a0a0"></div>
<div class="a" style="left:31px;top:17px;width:1px;height:89px;border-left:1px dotted #a0a0a0"></div>
<div class="a" style="left:31px;top:145px;width:1px;height:57px;border-left:1px dotted #a0a0a0"></div>
<div class="a" style="left:31px;top:289px;width:1px;height:185px;border-left:1px dotted #a0a0a0"></div>
<svg class="a" style="left:7px;top:5px" width="10" height="7"><path d="M1 1l4 4 4-4" fill="none" stroke="#404040" stroke-width="1.4"/></svg>
<div class="a" style="left:16px;top:9px;width:7px;height:1px;border-top:1px dotted #a0a0a0"></div>
<svg class="a" style="left:23px;top:3px" width="16" height="12"><path d="M.5 1.5h5l1 1.5h7v8.5H.5z" fill="#e6c26a" stroke="#b08a36"/><path d="M2.5 5.5h13l-2.5 6H.5z" fill="#fbe39a" stroke="#b08a36"/></svg>
<div class="t" style="left:44px;top:1px;font-size:12px">常用构件类型</div>
<div class="a" style="left:32px;top:25px;width:11px;height:1px;border-top:1px dotted #a0a0a0"></div>
<svg class="a" style="left:43px;top:18px" width="16" height="15"><path d="M3 1v11M7 1v11M11 1v11M1 3h13M1 7h13M1 11h13" stroke="#2a5ac8" stroke-width="1.3"/><circle cx="14.5" cy="3" r="1.2" fill="#fff" stroke="#2a5ac8" stroke-width=".8"/><circle cx="14.5" cy="7" r="1.2" fill="#fff" stroke="#2a5ac8" stroke-width=".8"/><circle cx="14.5" cy="11" r="1.2" fill="#fff" stroke="#2a5ac8" stroke-width=".8"/><circle cx="3" cy="13.5" r="1.1" fill="#2a5ac8"/><circle cx="7" cy="13.5" r="1.1" fill="#2a5ac8"/><circle cx="11" cy="13.5" r="1.1" fill="#2a5ac8"/></svg>
<div class="t" style="left:63px;top:17px;font-size:12px">轴网<span style="font-family:'Liberation Mono',monospace;font-size:10px">(J)</span></div>
<div class="a" style="left:32px;top:41px;width:11px;height:1px;border-top:1px dotted #a0a0a0"></div>
<svg class="a" style="left:43px;top:34px" width="16" height="15"><rect x="1" y="1" width="14" height="13" fill="#fff" stroke="#1a4aa0" stroke-width="1.8"/><path d="M4.5 1v13M11.5 1v13M1 4.5h14M1 10.5h14" stroke="#1a4aa0" stroke-width="1.2"/><rect x="6" y="6" width="4" height="3" fill="#cfe0ff"/></svg>
<div class="t" style="left:63px;top:33px;font-size:12px">筏板基础<span style="font-family:'Liberation Mono',monospace;font-size:10px">(M)</span></div>
<div class="a" style="left:32px;top:57px;width:11px;height:1px;border-top:1px dotted #a0a0a0"></div>
<svg class="a" style="left:43px;top:50px" width="16" height="15"><defs><linearGradient id="gc" x1="0" x2="1"><stop offset="0" stop-color="#1a4ab0"/><stop offset=".5" stop-color="#9cc8ff"/><stop offset="1" stop-color="#1a4ab0"/></linearGradient></defs><path d="M1 1h14v3l-3 2v8H4V6L1 4z" fill="url(#gc)" stroke="#1a3a90" stroke-width="1"/></svg>
<div class="t" style="left:63px;top:49px;font-size:12px">框柱<span style="font-family:'Liberation Mono',monospace;font-size:10px">(Z)</span></div>
<div class="a" style="left:32px;top:73px;width:11px;height:1px;border-top:1px dotted #a0a0a0"></div>
<svg class="a" style="left:43px;top:66px" width="16" height="15"><defs><linearGradient id="gw" x1="0" y1="0" x2="1" y2="1"><stop offset="0" stop-color="#fff"/><stop offset="1" stop-color="#d8d0c8"/></linearGradient></defs><rect x="1" y="1" width="12" height="13" fill="url(#gw)" stroke="#d07838"/><path d="M3 12h1M6 11h1M9 12h1M4 9h1M8 8h1M10 10h1M6 6h1M9 5h1" stroke="#888"/><path d="M13 4h2M13 7h2M13 10h2" stroke="#e07830" stroke-width="1.4"/></svg>
<div class="t" style="left:63px;top:65px;font-size:12px">剪力墙<span style="font-family:'Liberation Mono',monospace;font-size:10px">(Q)</span></div>
<div class="a" style="left:32px;top:89px;width:11px;height:1px;border-top:1px dotted #a0a0a0"></div>
<svg class="a" style="left:43px;top:82px" width="16" height="15"><path d="M2 1h11l2 2v3l-3 1v7H6V7L2 4z" fill="#c8e2ff" stroke="#2a6ad0" stroke-width="1.1"/><path d="M6 7l7-5M6 12l6-5" stroke="#2a6ad0" stroke-width=".9"/></svg>
<div class="t" style="left:63px;top:81px;font-size:12px">梁<span style="font-family:'Liberation Mono',monospace;font-size:10px">(L)</span></div>
<div class="a" style="left:32px;top:105px;width:11px;height:1px;border-top:1px dotted #a0a0a0"></div>
<svg class="a" style="left:43px;top:98px" width="16" height="15"><defs><linearGradient id="gs" x1="0" x2="1"><stop offset="0" stop-color="#5a90e8"/><stop offset="1" stop-color="#d8e8ff"/></linearGradient></defs><path d="M4 1h11l-2 13H1z" fill="url(#gs)" stroke="#1a4aa8" stroke-width="1.1"/></svg>
<div class="t" style="left:63px;top:97px;font-size:12px">现浇板<span style="font-family:'Liberation Mono',monospace;font-size:10px">(B)</span></div>
<svg class="a" style="left:8px;top:116px" width="7" height="10"><path d="M1 1l4 4-4 4" fill="none" stroke="#a0a0a0" stroke-width="1.4"/></svg>
<div class="a" style="left:16px;top:121px;width:7px;height:1px;border-top:1px dotted #a0a0a0"></div>
<svg class="a" style="left:23px;top:115px" width="16" height="12"><path d="M.5 1.5h5l1 1.5h8v8.5H.5z" fill="#e9c468" stroke="#b08a36"/><rect x=".5" y="4.5" width="14" height="7" fill="#f8dc8a" stroke="#b08a36"/></svg>
<div class="t" style="left:44px;top:113px;font-size:12px">轴线</div>
<svg class="a" style="left:7px;top:133px" width="10" height="7"><path d="M1 1l4 4 4-4" fill="none" stroke="#404040" stroke-width="1.4"/></svg>
<div class="a" style="left:16px;top:137px;width:7px;height:1px;border-top:1px dotted #a0a0a0"></div>
<svg class="a" style="left:23px;top:131px" width="16" height="12"><path d="M.5 1.5h5l1 1.5h7v8.5H.5z" fill="#e6c26a" stroke="#b08a36"/><path d="M2.5 5.5h13l-2.5 6H.5z" fill="#fbe39a" stroke="#b08a36"/></svg>
<div class="t" style="left:44px;top:129px;font-size:12px">柱</div>
<div class="a" style="left:32px;top:153px;width:11px;height:1px;border-top:1px dotted #a0a0a0"></div>
<svg class="a" style="left:43px;top:146px" width="16" height="15"><path d="M1 1h14v3l-3 2v8H4V6L1 4z" fill="url(#gc)" stroke="#1a3a90" stroke-width="1"/></svg>
<div class="t" style="left:63px;top:145px;font-size:12px">框柱<span style="font-family:'Liberation Mono',monospace;font-size:10px">(Z)</span></div>
<div class="a" style="left:32px;top:169px;width:11px;height:1px;border-top:1px dotted #a0a0a0"></div>
<svg class="a" style="left:43px;top:162px" width="16" height="15"><path d="M1 1h14v3l-3 2v8H4V6L1 4z" fill="url(#gc)" stroke="#1a3a90" stroke-width="1"/></svg>
<div class="t" style="left:63px;top:161px;font-size:12px">暗柱<span style="font-family:'Liberation Mono',monospace;font-size:10px">(Z)</span></div>
<div class="a" style="left:32px;top:185px;width:11px;height:1px;border-top:1px dotted #a0a0a0"></div>
<svg class="a" style="left:43px;top:178px" width="16" height="15"><path d="M1 1h14v3l-3 2v8H4V6L1 4z" fill="url(#gc)" stroke="#1a3a90" stroke-width="1"/></svg>
<div class="t" style="left:63px;top:177px;font-size:12px">端柱<span style="font-family:'Liberation Mono',monospace;font-size:10px">(Z)</span></div>
<div class="a" style="left:32px;top:201px;width:11px;height:1px;border-top:1px dotted #a0a0a0"></div>
<svg class="a" style="left:43px;top:194px" width="16" height="15"><path d="M4 1h8v2h2v3h-2v2h2v3h-2v3H4v-3H2V8h2V6H2V3h2z" fill="url(#gc)" stroke="#1a3a90"/></svg>
<div class="t" style="left:63px;top:193px;font-size:12px">构造柱<span style="font-family:'Liberation Mono',monospace;font-size:10px">(Z)</span></div>
<svg class="a" style="left:8px;top:212px" width="7" height="10"><path d="M1 1l4 4-4 4" fill="none" stroke="#a0a0a0" stroke-width="1.4"/></svg>
<div class="a" style="left:16px;top:217px;width:7px;height:1px;border-top:1px dotted #a0a0a0"></div>
<svg class="a" style="left:23px;top:211px" width="16" height="12"><path d="M.5 1.5h5l1 1.5h8v8.5H.5z" fill="#e9c468" stroke="#b08a36"/><rect x=".5" y="4.5" width="14" height="7" fill="#f8dc8a" stroke="#b08a36"/></svg>
<div class="t" style="left:44px;top:209px;font-size:12px">墙</div>
<svg class="a" style="left:8px;top:228px" width="7" height="10"><path d="M1 1l4 4-4 4" fill="none" stroke="#a0a0a0" stroke-width="1.4"/></svg>
<div class="a" style="left:16px;top:233px;width:7px;height:1px;border-top:1px dotted #a0a0a0"></div>
<svg class="a" style="left:23px;top:227px" width="16" height="12"><path d="M.5 1.5h5l1 1.5h8v8.5H.5z" fill="#e9c468" stroke="#b08a36"/><rect x=".5" y="4.5" width="14" height="7" fill="#f8dc8a" stroke="#b08a36"/></svg>
<div class="t" style="left:44px;top:225px;font-size:12px">门窗洞</div>
<svg class="a" style="left:8px;top:244px" width="7" height="10"><path d="M1 1l4 4-4 4" fill="none" stroke="#a0a0a0" stroke-width="1.4"/></svg>
<div class="a" style="left:16px;top:249px;width:7px;height:1px;border-top:1px dotted #a0a0a0"></div>
<svg class="a" style="left:23px;top:243px" width="16" height="12"><path d="M.5 1.5h5l1 1.5h8v8.5H.5z" fill="#e9c468" stroke="#b08a36"/><rect x=".5" y="4.5" width="14" height="7" fill="#f8dc8a" stroke="#b08a36"/></svg>
<div class="t" style="left:44px;top:241px;font-size:12px">梁</div>
<svg class="a" style="left:8px;top:260px" width="7" height="10"><path d="M1 1l4 4-4 4" fill="none" stroke="#a0a0a0" stroke-width="1.4"/></svg>
<div class="a" style="left:16px;top:265px;width:7px;height:1px;border-top:1px dotted #a0a0a0"></div>
<svg class="a" style="left:23px;top:259px" width="16" height="12"><path d="M.5 1.5h5l1 1.5h8v8.5H.5z" fill="#e9c468" stroke="#b08a36"/><rect x=".5" y="4.5" width="14" height="7" fill="#f8dc8a" stroke="#b08a36"/></svg>
<div class="t" style="left:44px;top:257px;font-size:12px">板</div>
<svg class="a" style="left:7px;top:277px" width="10" height="7"><path d="M1 1l4 4 4-4" fill="none" stroke="#404040" stroke-width="1.4"/></svg>
<div class="a" style="left:16px;top:281px;width:7px;height:1px;border-top:1px dotted #a0a0a0"></div>
<svg class="a" style="left:23px;top:275px" width="16" height="12"><path d="M.5 1.5h5l1 1.5h7v8.5H.5z" fill="#e6c26a" stroke="#b08a36"/><path d="M2.5 5.5h13l-2.5 6H.5z" fill="#fbe39a" stroke="#b08a36"/></svg>
<div class="t" style="left:44px;top:273px;font-size:12px">基础</div>
<div class="a" style="left:32px;top:297px;width:11px;height:1px;border-top:1px dotted #a0a0a0"></div>
<svg class="a" style="left:43px;top:290px" width="16" height="15"><path d="M1 14L6 6V2l3-2h6v9l-2 2v3z" fill="#fff" stroke="#1a3a90" stroke-width="1.1"/><path d="M9 0h6v9l-2 2V3z" fill="#4a7ad0"/><path d="M6 2h3v12H6z" fill="#dfe8f8" stroke="#1a3a90" stroke-width=".8"/></svg>
<div class="t" style="left:63px;top:289px;font-size:12px">基础梁<span style="font-family:'Liberation Mono',monospace;font-size:10px">(F)</span></div>
<div class="a" style="left:32px;top:313px;width:11px;height:1px;border-top:1px dotted #a0a0a0"></div>
<svg class="a" style="left:43px;top:306px" width="16" height="15"><rect x="1" y="1" width="14" height="13" fill="#fff" stroke="#1a4aa0" stroke-width="1.8"/><path d="M4.5 1v13M11.5 1v13M1 4.5h14M1 10.5h14" stroke="#1a4aa0" stroke-width="1.2"/><rect x="6" y="6" width="4" height="3" fill="#cfe0ff"/></svg>
<div class="t" style="left:63px;top:305px;font-size:12px">筏板基础<span style="font-family:'Liberation Mono',monospace;font-size:10px">(M)</span></div>
<div class="a" style="left:32px;top:329px;width:11px;height:1px;border-top:1px dotted #a0a0a0"></div>
<svg class="a" style="left:43px;top:322px" width="16" height="15"><path d="M1 2h3v3h8V2h3" fill="none" stroke="#3a6ad0" stroke-width="1.2" stroke-dasharray="2 1"/><path d="M1 7l4 6h6l4-6z" fill="#dfeaff" stroke="#3a6ad0" stroke-width="1.1"/><path d="M4 9h1M7 10h1M10 9h1M6 12h1M9 12h1" stroke="#5a7ad0"/></svg>
<div class="t" style="left:63px;top:321px;font-size:12px">集水坑<span style="font-family:'Liberation Mono',monospace;font-size:10px">(K)</span></div>
<div class="a" style="left:32px;top:345px;width:11px;height:1px;border-top:1px dotted #a0a0a0"></div>
<svg class="a" style="left:43px;top:338px" width="16" height="15"><defs><linearGradient id="gz" x1="0" y1="0" x2="0" y2="1"><stop offset="0" stop-color="#e8e8e8"/><stop offset="1" stop-color="#808080"/></linearGradient></defs><rect x="1" y="10" width="14" height="4" fill="url(#gz)" stroke="#707070" stroke-width=".8"/><path d="M4 10l2-4h4l2 4z" fill="#7aa8f0" stroke="#1a3a90" stroke-width=".9"/><rect x="6.5" y="2" width="3" height="4" fill="#fff" stroke="#1a3a90" stroke-width=".9"/></svg>
<div class="t" style="left:63px;top:337px;font-size:12px">柱墩<span style="font-family:'Liberation Mono',monospace;font-size:10px">(Y)</span></div>
<div class="a" style="left:32px;top:361px;width:11px;height:1px;border-top:1px dotted #a0a0a0"></div>
<svg class="a" style="left:43px;top:354px" width="16" height="15"><defs><linearGradient id="gf" x1="0" y1="0" x2="0" y2="1"><stop offset="0" stop-color="#fff"/><stop offset="1" stop-color="#b8d4ff"/></linearGradient></defs><rect x="1" y="1" width="14" height="13" fill="url(#gf)" stroke="#2a6ad0" stroke-width="1.2"/><path d="M4 6h8M8 4v8M5 9h2M9 9v2h3" fill="none" stroke="#2a5ac0" stroke-width="1.1"/></svg>
<div class="t" style="left:63px;top:353px;font-size:12px">筏板主筋<span style="font-family:'Liberation Mono',monospace;font-size:10px">(R)</span></div>
<div class="a" style="left:32px;top:377px;width:11px;height:1px;border-top:1px dotted #a0a0a0"></div>
<svg class="a" style="left:43px;top:370px" width="16" height="15"><rect x="1" y="1" width="14" height="13" fill="url(#gf)" stroke="#2a6ad0" stroke-width="1.2"/><path d="M4 5h8v4H4zM8 3v10M3 10q5 2 10 0" fill="none" stroke="#2a5ac0" stroke-width="1.1"/></svg>
<div class="t" style="left:63px;top:369px;font-size:12px">筏板负筋<span style="font-family:'Liberation Mono',monospace;font-size:10px">(X)</span></div>
<div class="a" style="left:32px;top:393px;width:11px;height:1px;border-top:1px dotted #a0a0a0"></div>
<svg class="a" style="left:43px;top:386px" width="16" height="15"><path d="M1 8l8-3 6 2-8 3z" fill="#e8f0ff" stroke="#1a3a90" stroke-width=".9"/><path d="M1 8v4l6 2.5V10z" fill="#fff" stroke="#1a3a90" stroke-width=".9"/><path d="M7 10v4.5l8-3V7z" fill="#6a9ae0" stroke="#1a3a90" stroke-width=".9"/><path d="M5 1h5v6.5H5z" fill="#cfe0ff" stroke="#1a3a90" stroke-width=".9"/><path d="M7 1.5v6" stroke="#1a3a90" stroke-width="1.4"/></svg>
<div class="t" style="left:63px;top:385px;font-size:12px">独立基础<span style="font-family:'Liberation Mono',monospace;font-size:10px">(P)</span></div>
<div class="a" style="left:32px;top:409px;width:11px;height:1px;border-top:1px dotted #a0a0a0"></div>
<svg class="a" style="left:43px;top:402px" width="16" height="15"><path d="M1 14v-3l3-1V6l3-4h3l3 2v6l2 1v3z" fill="#fff" stroke="#1a3a90" stroke-width="1.1"/><path d="M10 2l3-2v6l-3 2z" fill="#4a7ad0"/><path d="M4 10h9" stroke="#1a3a90" stroke-width=".8"/></svg>
<div class="t" style="left:63px;top:401px;font-size:12px">条形基础<span style="font-family:'Liberation Mono',monospace;font-size:10px">(T)</span></div>
<div class="a" style="left:32px;top:425px;width:11px;height:1px;border-top:1px dotted #a0a0a0"></div>
<svg class="a" style="left:43px;top:418px" width="16" height="15"><path d="M1 3l3-2h11l-3 2z" fill="#dfe8f8" stroke="#1a3a90" stroke-width=".9"/><path d="M1 3h11v3H1z" fill="#fff" stroke="#1a3a90" stroke-width=".9"/><path d="M12 3l3-2v3l-3 2z" fill="#4a7ad0" stroke="#1a3a90" stroke-width=".9"/><path d="M5 6h3v5l-1.5 3L5 11z" fill="#6a9ae0" stroke="#1a3a90" stroke-width=".9"/></svg>
<div class="t" style="left:63px;top:417px;font-size:12px">桩承台<span style="font-family:'Liberation Mono',monospace;font-size:10px">(V)</span></div>
<div class="a" style="left:32px;top:441px;width:11px;height:1px;border-top:1px dotted #a0a0a0"></div>
<svg class="a" style="left:43px;top:434px" width="16" height="15"><path d="M1 14L6 6V2l3-2h6v9l-2 2v3z" fill="#fff" stroke="#1a3a90" stroke-width="1.1"/><path d="M9 0h6v9l-2 2V3z" fill="#4a7ad0"/><path d="M6 2h3v12H6z" fill="#dfe8f8" stroke="#1a3a90" stroke-width=".8"/></svg>
<div class="t" style="left:63px;top:433px;font-size:12px">承台梁<span style="font-family:'Liberation Mono',monospace;font-size:10px">(F)</span></div>
<div class="a" style="left:32px;top:457px;width:11px;height:1px;border-top:1px dotted #a0a0a0"></div>
<svg class="a" style="left:43px;top:450px" width="16" height="15"><path d="M6 1h4v5l4 2-6 6-6-6 4-2z" fill="#fff" stroke="#1a3a90" stroke-width="1.1"/><path d="M8 1v12" stroke="#4a7ad0" stroke-width="1.3"/></svg>
<div class="t" style="left:63px;top:449px;font-size:12px">桩<span style="font-family:'Liberation Mono',monospace;font-size:10px">(U)</span></div>
<div class="a" style="left:32px;top:473px;width:11px;height:1px;border-top:1px dotted #a0a0a0"></div>
<svg class="a" style="left:43px;top:466px" width="16" height="15"><defs><linearGradient id="gb" x1="0" y1="0" x2="0" y2="1"><stop offset="0" stop-color="#e0ecff"/><stop offset="1" stop-color="#2a5ac0"/></linearGradient></defs><path d="M1 1.5h14" stroke="#1a3a90" stroke-width="1.5"/><path d="M5 2v9M11 2v9" stroke="#1a3a90" stroke-dasharray="1 1"/><rect x="1" y="11" width="14" height="3" fill="url(#gb)"/></svg>
<div class="t" style="left:63px;top:465px;font-size:12px">基础板带<span style="font-family:'Liberation Mono',monospace;font-size:10px">(W)</span></div>
<svg class="a" style="left:8px;top:484px" width="7" height="10"><path d="M1 1l4 4-4 4" fill="none" stroke="#a0a0a0" stroke-width="1.4"/></svg>
<div class="a" style="left:16px;top:489px;width:7px;height:1px;border-top:1px dotted #a0a0a0"></div>
<svg class="a" style="left:23px;top:483px" width="16" height="12"><path d="M.5 1.5h5l1 1.5h8v8.5H.5z" fill="#e9c468" stroke="#b08a36"/><rect x=".5" y="4.5" width="14" height="7" fill="#f8dc8a" stroke="#b08a36"/></svg>
<div class="t" style="left:44px;top:481px;font-size:12px">其它</div>
</div>
<div class="a" style="left:1px;top:660px;width:164px;height:22px;background:#f0f0f0;border:1px solid #a8a8a8"></div>
<div class="t" style="left:1px;width:164px;text-align:center;top:663px">单构件输入</div>
<div class="a" style="left:1px;top:682px;width:164px;height:23px;background:#f0f0f0;border:1px solid #a8a8a8"></div>
<div class="t" style="left:1px;width:164px;text-align:center;top:685px">报表预览</div>
<div class="a" style="left:170px;top:167px;width:1196px;height:1px;background:#fff"></div>
<div class="a" style="left:1365px;top:167px;width:1px;height:508px;background:#f8f8f8"></div>
<svg class="a" style="left:170px;top:168px" width="1195" height="507" viewBox="170 168 1195 507" shape-rendering="crispEdges"><rect x="170" y="168" width="1196" height="507" fill="#000"/><line x1="415" y1="188" x2="740" y2="199" stroke="#f00000" stroke-width="1"/><line x1="416" y1="205.5" x2="740" y2="218" stroke="#f00000" stroke-width="1"/><line x1="421" y1="241" x2="740" y2="253.5" stroke="#f00000" stroke-width="1"/><line x1="419" y1="276.4" x2="740" y2="288" stroke="#f00000" stroke-width="1"/><line x1="417" y1="404.5" x2="860" y2="421" stroke="#f00000" stroke-width="1"/><line x1="170" y1="465" x2="1366" y2="509" stroke="#f00000"/><line x1="643.5" y1="168" x2="683" y2="478" stroke="#f00000"/><line x1="683" y1="476" x2="840" y2="410" stroke="#f00000"/><line x1="553" y1="529" x2="683" y2="476" stroke="#109010"/><line x1="930" y1="445" x2="935" y2="492" stroke="#f00000"/><line x1="1026" y1="465" x2="1029.5" y2="497" stroke="#f00000"/><line x1="1088.4" y1="470" x2="1091" y2="499.2" stroke="#f00000"/><line x1="1119" y1="472" x2="1122.7" y2="499.8" stroke="#f00000"/><line x1="1121" y1="472" x2="1124" y2="500" stroke="#f00000"/><line x1="1150" y1="472" x2="1152.7" y2="501.4" stroke="#f00000"/><line x1="1301.4" y1="455" x2="1306.8" y2="506.5" stroke="#f00000"/></svg>
<svg class="a" style="left:170px;top:168px" width="1195" height="507" viewBox="170 168 1195 507"><g transform="translate(-2,33)"><ellipse cx="1096.6" cy="268.6" rx="375.7" ry="176.4" transform="rotate(5.1 1096.6 268.6)" fill="#474747"/></g><ellipse cx="1096.6" cy="268.6" rx="375.7" ry="176.4" transform="rotate(5.1 1096.6 268.6)" fill="#585858"/><line x1="1099" y1="270" x2="1096" y2="300" stroke="#a8a8a8" stroke-width="1.3"/></svg>
<svg class="a" style="left:170px;top:168px" width="1195" height="507" viewBox="170 168 1195 507"><polygon points="170,168 411,168 421.8,245 412,369 421.8,444.7 416.8,506.6 354.3,504.6 348.5,448.6 170,441" fill="#b3b300"/><polygon points="170,168 411,168 421.8,245 392.7,245.7 385,181 346,180 180,174 170,174" fill="#e6e600"/><polygon points="385,181 393,246 385,340 377,426 371,340 378,265" fill="#9c9c00"/><polygon points="170,355.5 360,362.5 377,426 370,426 356,365.5 170,358.5" fill="#e6e600"/><polygon points="170,372.5 353,380.5 368,440 360,440 349,384.5 170,376.5" fill="#e6e600"/><polygon points="349,384.5 360,440 358,470 354,503 348.5,448.6 346,441" fill="#9c9c00"/><polygon points="412,369 421.8,444.7 414,442 414,428 407,427" fill="#e6e600"/></svg>
<svg class="a" style="left:170px;top:168px" width="1195" height="507" viewBox="170 168 1195 507"><circle cx="767" cy="421" r="225" fill="none" stroke="#9c9c9c" stroke-width="1" shape-rendering="crispEdges"/><circle cx="767" cy="196" r="14" fill="none" stroke="#9c9c9c" stroke-width="1" shape-rendering="crispEdges"/><circle cx="542" cy="421" r="14" fill="none" stroke="#9c9c9c" stroke-width="1" shape-rendering="crispEdges"/><circle cx="992" cy="421" r="14" fill="none" stroke="#9c9c9c" stroke-width="1" shape-rendering="crispEdges"/><circle cx="767" cy="646" r="14" fill="none" stroke="#9c9c9c" stroke-width="1" shape-rendering="crispEdges"/><line x1="594" y1="449" x2="772" y2="454" stroke="#b8aea4" stroke-width="1"/><line x1="594" y1="460.3" x2="772" y2="466" stroke="#b8aea4" stroke-width="1"/><line x1="594" y1="472" x2="772" y2="477.9" stroke="#b8aea4" stroke-width="1"/><line x1="594" y1="492" x2="772" y2="497.8" stroke="#b8aea4" stroke-width="1"/><line x1="594" y1="504.8" x2="772" y2="510.7" stroke="#b8aea4" stroke-width="1"/><line x1="594" y1="516.5" x2="772" y2="522.4" stroke="#b8aea4" stroke-width="1"/><line x1="595" y1="436.0" x2="605.7" y2="519.0245" stroke="#b8aea4" stroke-width="1"/><line x1="621" y1="436.91" x2="631.5" y2="519.9275" stroke="#b8aea4" stroke-width="1"/><line x1="645.6" y1="437.771" x2="656" y2="520.785" stroke="#b8aea4" stroke-width="1"/><line x1="670.7" y1="438.6495" x2="680.7" y2="521.6495" stroke="#b8aea4" stroke-width="1"/><line x1="688.5" y1="439.2725" x2="699.5" y2="522.3075" stroke="#b8aea4" stroke-width="1"/><line x1="713.6" y1="440.151" x2="724" y2="523.165" stroke="#b8aea4" stroke-width="1"/><line x1="738.7" y1="441.0295" x2="748.7" y2="524.0295" stroke="#b8aea4" stroke-width="1"/><line x1="762.8" y1="441.873" x2="773.4" y2="524.894" stroke="#b8aea4" stroke-width="1"/><line x1="589" y1="393" x2="775" y2="400" stroke="#a8a8a8" stroke-width="1.5"/><line x1="585.3" y1="436.8" x2="770" y2="443.2" stroke="#a8a8a8" stroke-width="1.5"/><line x1="601" y1="481.4" x2="786.3" y2="488.4" stroke="#d8d8d8" stroke-width="1.6"/><line x1="597.5" y1="524.7" x2="781.6" y2="531.8" stroke="#a8a8a8" stroke-width="1.5"/><line x1="589" y1="393" x2="585.3" y2="436.8" stroke="#a8a8a8" stroke-width="1.5"/><line x1="585.3" y1="436.8" x2="601" y2="481.4" stroke="#a8a8a8" stroke-width="1.5"/><line x1="601" y1="481.4" x2="597.5" y2="524.7" stroke="#a8a8a8" stroke-width="1.5"/><line x1="591" y1="397" x2="597" y2="481" stroke="#a8a8a8" stroke-width="1.5"/><line x1="597" y1="481" x2="597.5" y2="524.7" stroke="#a8a8a8" stroke-width="1.5"/><line x1="775" y1="400" x2="786.3" y2="488.4" stroke="#a8a8a8" stroke-width="1.5"/><line x1="786.3" y1="488.4" x2="781.6" y2="531.8" stroke="#a8a8a8" stroke-width="1.5"/><line x1="775" y1="400" x2="772" y2="442.7" stroke="#a8a8a8" stroke-width="1.5"/><line x1="772" y1="442.7" x2="781.6" y2="531.8" stroke="#a8a8a8" stroke-width="1.5"/><line x1="659" y1="290" x2="683" y2="478" stroke="#f00000"/><line x1="683" y1="476" x2="700" y2="469" stroke="#f00000"/><polygon points="645,168 653,171 658,178 658,186 653,192 645,194 637,191 632,185 632,177 637,171" fill="none" stroke="#109010"/><text x="645" y="186" font-size="13" fill="#c8c8c8" text-anchor="middle" font-family="Liberation Sans">5</text><polygon points="182,452 190,455 195,461 195,469 190,475 182,478 174,475 169,469 169,461 174,455" fill="none" stroke="#109010"/><text x="182" y="470" font-size="12" fill="#e0e0e0" text-anchor="middle" font-family="Liberation Sans">A1</text><line x1="225" y1="625" x2="262" y2="626" stroke="#f02020" stroke-width="3"/><polygon points="262,621 274,626.5 262,630" fill="#f02020"/><text x="261" y="624" font-size="11" fill="#f02020" font-family="Liberation Sans">X</text><line x1="225" y1="625" x2="227" y2="590" stroke="#2080ff" stroke-width="3"/><polygon points="222,592 227.5,580 232,592" fill="#2080ff"/><text x="215" y="586" font-size="11" fill="#2080ff" font-family="Liberation Sans">Z</text><line x1="222" y1="622" x2="222" y2="603" stroke="#20c020" stroke-width="2"/><path d="M219 605l3-3 3 2" stroke="#20c020" fill="none"/><text x="230" y="610" font-size="11" fill="#20c020" font-family="Liberation Sans">Y</text></svg>
<div class="a" style="left:179px;top:170px;width:168px;height:178px;background:#fff;border:1px solid #4a90d8;box-shadow:3px 3px 9px rgba(0,0,0,.5)"></div>
<div class="t " style="left:188px;top:178px;color:#222;font-size:12px;">钢筋显示控制面板</div>
<div class="a" style="left:181px;top:201px;width:164px;height:146px;border:1px solid #a0a0a0;background:#fff"></div>
<div class="a" style="left:198px;top:203px;width:145px;height:12px;border:1px dotted #444"></div>
<div class="a" style="left:185px;top:205px;width:11px;height:11px;border:1px solid #888;background:#fff"></div>
<svg class="a" style="left:186px;top:206px" width="9" height="9"><path d="M1 4.5l2.5 2.5L8 1.5" fill="none" stroke="#555" stroke-width="1.2"/></svg>
<div class="t" style="left:200px;top:202px;font-size:12px;letter-spacing:-0.5px">横向底筋</div>
<div class="a" style="left:185px;top:217px;width:11px;height:11px;border:1px solid #888;background:#fff"></div>
<svg class="a" style="left:186px;top:218px" width="9" height="9"><path d="M1 4.5l2.5 2.5L8 1.5" fill="none" stroke="#555" stroke-width="1.2"/></svg>
<div class="t" style="left:200px;top:214px;font-size:12px;letter-spacing:-0.5px">纵向底筋</div>
<div class="a" style="left:185px;top:229px;width:11px;height:11px;border:1px solid #888;background:#fff"></div>
<svg class="a" style="left:186px;top:230px" width="9" height="9"><path d="M1 4.5l2.5 2.5L8 1.5" fill="none" stroke="#555" stroke-width="1.2"/></svg>
<div class="t" style="left:200px;top:226px;font-size:12px;letter-spacing:-0.5px">显示其它图元</div>
<div class="a" style="left:185px;top:241px;width:11px;height:11px;border:1px solid #888;background:#fff"></div>
<svg class="a" style="left:186px;top:242px" width="9" height="9"><path d="M1 4.5l2.5 2.5L8 1.5" fill="none" stroke="#555" stroke-width="1.2"/></svg>
<div class="t" style="left:200px;top:238px;font-size:12px;letter-spacing:-0.5px">显示详细公式</div>
<div class="a" style="left:171px;top:677px;width:209px;height:28px;background:linear-gradient(#fbfbfb,#f2f2f2);border-radius:2px"></div>
<div class="a" style="left:174px;top:682px;width:2px;height:2px;background:#a8a8a8"></div>
<div class="a" style="left:174px;top:686px;width:2px;height:2px;background:#a8a8a8"></div>
<div class="a" style="left:174px;top:690px;width:2px;height:2px;background:#a8a8a8"></div>
<div class="a" style="left:174px;top:694px;width:2px;height:2px;background:#a8a8a8"></div>
<svg class="a" style="left:181px;top:682px" width="16" height="16" viewBox="0 0 16 16"><path d="M1 3.5h14M4.5 2v14" stroke="#e09090" stroke-width="2.6"/><path d="M8 7l6 7-3-1-1 2z" fill="#dfe6f2" stroke="#3a4a7a"/></svg>
<div class="t " style="left:201px;top:682px;color:#000;font-size:12px;">正交</div>
<div class="a" style="left:229px;top:678px;width:75px;height:23px;background:#dfe9f4;border:1px solid #1a7fdc"></div>
<svg class="a" style="left:232px;top:681px" width="17" height="17" viewBox="0 0 17 17"><path d="M2 1v15M15 1v15" stroke="#a04040" stroke-width="1.3"/><path d="M1 8h15" stroke="#333"/><circle cx="2" cy="8" r="1.5" fill="#a04040"/><circle cx="15" cy="8" r="1.5" fill="#a04040"/><ellipse cx="9" cy="11" rx="5" ry="4" fill="#e8c060" stroke="#a08020"/></svg>
<div class="t " style="left:252px;top:682px;color:#000;font-size:12px;">对象捕捉</div>
<svg class="a" style="left:307px;top:682px" width="17" height="16" viewBox="0 0 17 16"><rect x="1" y="1" width="15" height="14" fill="#fff" stroke="#555"/><path d="M1 4h15" stroke="#c03030" stroke-width="2"/><path d="M1 1h3M13 1h3" stroke="#c03030" stroke-width="2"/><text x="8.5" y="14" font-size="7" text-anchor="middle" font-family="Liberation Sans">12</text></svg>
<div class="t " style="left:327px;top:682px;color:#000;font-size:12px;">动态输入</div>
<div class="a" style="left:382px;top:677px;width:258px;height:28px;background:linear-gradient(#fbfbfb,#f2f2f2);border-radius:2px"></div>
<div class="a" style="left:385px;top:682px;width:2px;height:2px;background:#a8a8a8"></div>
<div class="a" style="left:385px;top:686px;width:2px;height:2px;background:#a8a8a8"></div>
<div class="a" style="left:385px;top:690px;width:2px;height:2px;background:#a8a8a8"></div>
<div class="a" style="left:385px;top:694px;width:2px;height:2px;background:#a8a8a8"></div>
<svg class="a" style="left:391px;top:682px" width="16" height="16" viewBox="0 0 16 16"><path d="M1 1l14 14M15 1L1 15" stroke="#2a60c8" stroke-width="1.5"/><rect x="6" y="6" width="4" height="4" fill="#1a3a90"/></svg>
<div class="t " style="left:412px;top:682px;color:#000;font-size:12px;">交点</div>
<div class="a" style="left:440px;top:678px;width:51px;height:23px;background:#dfe9f4;border:1px solid #1a7fdc"></div>
<div class="a" style="left:491px;top:678px;width:50px;height:23px;background:#dfe9f4;border:1px solid #1a7fdc"></div>
<svg class="a" style="left:443px;top:682px" width="16" height="16" viewBox="0 0 16 16"><path d="M1 12h14M11 2v10" stroke="#2a60c8" stroke-width="1.4"/><rect x="9.5" y="10.5" width="3" height="3" fill="#1a3a90"/></svg>
<div class="t " style="left:463px;top:682px;color:#000;font-size:12px;">垂点</div>
<svg class="a" style="left:494px;top:682px" width="16" height="16" viewBox="0 0 16 16"><path d="M1 8h14" stroke="#2a60c8" stroke-width="1.4"/><rect x="6" y="6" width="4" height="4" fill="#1a3a90"/></svg>
<div class="t " style="left:514px;top:682px;color:#000;font-size:12px;">中点</div>
<svg class="a" style="left:545px;top:681px" width="16" height="16" viewBox="0 0 16 16"><path d="M8 2l6 4.5-2.5 7.5h-7L2 6.5z" fill="none" stroke="#2a60c8" stroke-width="1.4"/></svg>
<div class="t " style="left:566px;top:682px;color:#000;font-size:12px;">顶点</div>
<svg class="a" style="left:596px;top:681px" width="18" height="17" viewBox="0 0 18 17"><path d="M2 15h14M9 6l-4 9M9 6l5 9" fill="none" stroke="#2a60c8" stroke-width="1.2"/><circle cx="2" cy="3" r="1" fill="#333"/><circle cx="16" cy="2" r="1" fill="#333"/><circle cx="2" cy="15" r="1" fill="#333"/><path d="M4 1v8" stroke="#2a60c8" stroke-dasharray="1 1"/></svg>
<div class="t " style="left:616px;top:682px;color:#000;font-size:12px;">坐标</div>
<div class="a" style="left:648px;top:677px;width:409px;height:28px;background:linear-gradient(#fbfbfb,#f2f2f2);border-radius:2px"></div>
<div class="a" style="left:651px;top:682px;width:2px;height:2px;background:#a8a8a8"></div>
<div class="a" style="left:651px;top:686px;width:2px;height:2px;background:#a8a8a8"></div>
<div class="a" style="left:651px;top:690px;width:2px;height:2px;background:#a8a8a8"></div>
<div class="a" style="left:651px;top:694px;width:2px;height:2px;background:#a8a8a8"></div>
<div class="a" style="left:656px;top:680px;width:58px;height:22px;background:#fff"></div>
<div class="a" style="left:700px;top:680px;width:14px;height:22px;background:#f0f0f0"></div>
<div class="t " style="left:658px;top:682px;color:#000;font-size:12px;">不偏移</div>
<div class="dd" style="left:704px;top:690px;border-top-color:#222"></div>
<div class="a" style="left:718px;top:682px;width:1px;height:18px;background:#c0c0c0"></div>
<div class="t " style="left:721px;top:682px;color:#8a8a8a;font-size:12px;">X=</div>
<div class="a" style="left:739px;top:679px;width:58px;height:23px;background:#f2f2f2;border:1px solid #8c8c8c"></div>
<div class="t" style="left:739px;width:39px;text-align:right;top:682px;color:#6a6a6a">0</div>
<svg class="a" style="left:785px;top:682px" width="9" height="17" viewBox="0 0 9 17"><path d="M1 6.5l3.5-4 3.5 4zM1 11.5l3.5 4 3.5-4z" fill="#555"/></svg>
<div class="t " style="left:798px;top:682px;color:#8a8a8a;font-size:12px;">mm</div>
<div class="t " style="left:825px;top:682px;color:#8a8a8a;font-size:12px;">Y=</div>
<div class="a" style="left:843px;top:679px;width:58px;height:23px;background:#f2f2f2;border:1px solid #8c8c8c"></div>
<div class="t" style="left:843px;width:39px;text-align:right;top:682px;color:#6a6a6a">0</div>
<svg class="a" style="left:889px;top:682px" width="9" height="17" viewBox="0 0 9 17"><path d="M1 6.5l3.5-4 3.5 4zM1 11.5l3.5 4 3.5-4z" fill="#555"/></svg>
<div class="t " style="left:902px;top:682px;color:#8a8a8a;font-size:12px;">mm</div>
<div class="a" style="left:928px;top:682px;width:1px;height:18px;background:#c0c0c0"></div>
<div class="a" style="left:933px;top:684px;width:11px;height:11px;background:#fff;border:1px solid #8a8a8a"></div>
<div class="t " style="left:952px;top:682px;color:#000;font-size:12px;">旋转</div>
<div class="a" style="left:980px;top:679px;width:68px;height:23px;background:#f2f2f2;border:1px solid #8c8c8c"></div>
<div class="t" style="left:980px;width:49px;text-align:right;top:682px;color:#6a6a6a">0.000</div>
<svg class="a" style="left:1036px;top:682px" width="9" height="17" viewBox="0 0 9 17"><path d="M1 6.5l3.5-4 3.5 4zM1 11.5l3.5 4 3.5-4z" fill="#555"/></svg>
<div class="t " style="left:1051px;top:680px;color:#555;font-size:11px;">°</div>
<div class="a" style="left:0px;top:706px;width:1366px;height:22px;background:#f0f0f0"></div>
<div class="a" style="left:0px;top:708px;width:147px;height:19px;border:1px solid;border-color:#dadada #e8e8e8 #e8e8e8 #dadada;background:#f8f8f8"></div>
<div class="t" style="left:2px;top:709px;font-size:12px"><span style="font-family:'Liberation Mono',monospace;font-size:10px">X=245701 Y=7486</span></div>
<div class="a" style="left:150px;top:708px;width:78px;height:19px;border:1px solid;border-color:#dadada #e8e8e8 #e8e8e8 #dadada;background:#f8f8f8"></div>
<div class="t" style="left:152px;top:709px;font-size:12px">层高<span style="font-family:'Liberation Mono',monospace;font-size:10px">:2.15m</span></div>
<div class="a" style="left:230px;top:708px;width:97px;height:19px;border:1px solid;border-color:#dadada #e8e8e8 #e8e8e8 #dadada;background:#f8f8f8"></div>
<div class="t" style="left:232px;top:709px;font-size:12px">底标高<span style="font-family:'Liberation Mono',monospace;font-size:10px">:-2.2m</span></div>
<div class="a" style="left:330px;top:708px;width:48px;height:19px;border:1px solid;border-color:#dadada #e8e8e8 #e8e8e8 #dadada;background:#f8f8f8"></div>
<div class="t" style="left:332px;top:709px;font-size:12px"><span style="font-family:'Liberation Mono',monospace;font-size:10px">1(1)</span></div>
<div class="a" style="left:381px;top:708px;width:913px;height:19px;border:1px solid;border-color:#dadada #e8e8e8 #e8e8e8 #dadada;background:#f8f8f8"></div>
<div class="t" style="left:383px;top:709px;font-size:12px"></div>
<div class="a" style="left:1296px;top:708px;width:67px;height:19px;border:1px solid;border-color:#dadada #e8e8e8 #e8e8e8 #dadada;background:#f8f8f8"></div>
<div class="t" style="left:1298px;top:709px;font-size:12px"><span style="font-family:'Liberation Mono',monospace;font-size:10px">16.9 FPS</span></div>
<div class="a" style="left:0px;top:728px;width:1366px;height:40px;background:#000"></div>
<svg class="a" style="left:16px;top:740px" width="17" height="17" viewBox="0 0 17 17"><path d="M0 2.3l7-1v6.7H0zM8 1.2l9-1.2v8H8zM0 9h7v6.8l-7-1zM8 9h9v8l-9-1.2z" fill="#fff"/></svg>
<div class="a" style="left:48px;top:728px;width:344px;height:40px;background:#333333"></div>
<svg class="a" style="left:57px;top:738px" width="22" height="22" viewBox="0 0 22 22"><circle cx="11" cy="11" r="9" fill="none" stroke="#fff" stroke-width="2.6"/></svg>
<div class="t " style="left:84px;top:742px;color:#a8a8a8;font-size:13.5px;">在这里输入你要搜索的内容</div>
<svg class="a" style="left:364px;top:737px" width="14" height="21" viewBox="0 0 14 21"><rect x="4" y="1" width="6" height="12" rx="3" fill="none" stroke="#bbb" stroke-width="1.3"/><path d="M1 10q6 8 12 0M7 15v5M4 20h6" fill="none" stroke="#bbb" stroke-width="1.3"/></svg>
<svg class="a" style="left:404px;top:738px" width="24" height="20" viewBox="0 0 24 20"><rect x="5" y="3" width="14" height="14" fill="none" stroke="#fff" stroke-width="1.4"/><path d="M2 5v10M22 5v10" stroke="#fff" stroke-width="1.4"/></svg>
<svg class="a" style="left:454px;top:737px" width="24" height="24" viewBox="0 0 24 24"><g fill="#e8e8e8"><path d="M12 12q-8-2-9-6t5-5q5 2 4 11z"/><path d="M12 12q2-8 6-9t5 5q-2 5-11 4z"/><path d="M12 12q8 2 9 6t-5 5q-5-2-4-11z"/><path d="M12 12q-2 8-6 9t-5-5q2-5 11-4z"/></g><circle cx="12" cy="12" r="2" fill="#000"/></svg>
<svg class="a" style="left:506px;top:736px" width="24" height="24" viewBox="0 0 24 24"><path d="M4 13h15q0-8-7-8t-8 8q0 8 8 8 5 0 7-3" fill="none" stroke="#eee" stroke-width="2.6"/><path d="M1 18q8-14 22-14" fill="none" stroke="#ccc" stroke-width="1.2"/></svg>
<svg class="a" style="left:555px;top:737px" width="24" height="23" viewBox="0 0 24 23"><path d="M12 3q-9 0-9 9t9 8q7 0 8-6q-4 5-9 2q-5-4 0-9 4-2 7 1-2-4-6-5" fill="none" stroke="#ddd" stroke-width="1.6"/></svg>
<svg class="a" style="left:609px;top:737px" width="23" height="23" viewBox="0 0 23 23"><path d="M3 12q1-10 10-10 9 1 8 11H8q1 5 6 5 4 0 6-2v5q-3 2-7 2Q3 23 3 12zM8 9h8q-1-4-4-4t-4 4z" fill="#1a78d8"/></svg>
<svg class="a" style="left:653px;top:735px" width="28" height="27" viewBox="0 0 28 27"><path d="M5 14q1-9 10-9 8 1 8 10H10q1 5 6 5 4 0 6-2v4q-3 2-7 2Q5 24 5 14zM10 11h8q-1-4-4-4t-4 4z" fill="#2a8ae0"/><path d="M2 23q-2-5 8-13t16-8q-1-2-6 0" fill="none" stroke="#f0c020" stroke-width="2"/></svg>
<svg class="a" style="left:702px;top:737px" width="24" height="22" viewBox="0 0 24 22"><path d="M1 3h8l2 2h12v16H1z" fill="#f0c850"/><rect x="1" y="7" width="22" height="14" fill="#fbe08a"/><path d="M7 21v-6h10v6" fill="#2a8ae0"/><rect x="10" y="15" width="4" height="6" fill="#fbe08a"/></svg>
<svg class="a" style="left:748px;top:736px" width="26" height="25" viewBox="0 0 26 25"><path d="M13 3q-10 0-11 10t10 11q10 0 11-9h-9v4h4q-2 2-6 2-6-1-6-8t7-7q4 0 6 2l3-3q-4-3-9-2z" fill="#1a88e8"/><path d="M17 3q5-2 8 2" stroke="#1a88e8" stroke-width="2" fill="none"/></svg>
<svg class="a" style="left:795px;top:736px" width="24" height="24" viewBox="0 0 24 24"><circle cx="12" cy="12" r="10.5" fill="#5cc030" stroke="#fff" stroke-width="1.5"/><path d="M7 13h10q0-6-5-6t-5 6q0 5 5 5 3 0 5-2" fill="none" stroke="#fff" stroke-width="2.2"/><path d="M2 20q10-2 20-16" stroke="#2a9a20" fill="none"/></svg>
<div class="a" style="left:831px;top:728px;width:45px;height:40px;background:#3b3e42"></div>
<div class="a" style="left:841px;top:736px;width:24px;height:24px;background:#1a8cf0;border-radius:3px"></div>
<svg class="a" style="left:841px;top:736px" width="24" height="24" viewBox="0 0 24 24"><path d="M12 4v16M5 12h14" stroke="#fff" stroke-width="2"/><path d="M7 9a3 3 0 1 0 0 6M17 9a3 3 0 1 1 0 6" fill="none" stroke="#fff" stroke-width="1.6"/></svg>
<div class="a" style="left:742px;top:766px;width:38px;height:2px;background:#7ab0e0"></div>
<div class="a" style="left:789px;top:766px;width:28px;height:2px;background:#7ab0e0"></div>
<div class="a" style="left:817px;top:766px;width:9px;height:2px;background:#4a6a90"></div>
<div class="a" style="left:831px;top:766px;width:45px;height:2px;background:#7ab0e0"></div>
<div class="t " style="left:889px;top:740px;color:#ddd;font-size:12px;">链接</div>
<div class="t " style="left:946px;top:732px;color:#eee;font-size:12px;">29%</div>
<div class="t " style="left:934px;top:749px;color:#eee;font-size:12px;">CPU使用</div>
<svg class="a" style="left:1004px;top:740px" width="20" height="16" viewBox="0 0 20 16"><path d="M2 6a11 11 0 0 1 16 0M5 9.5a7 7 0 0 1 10 0M7.5 12.5a3.5 3.5 0 0 1 5 0" fill="none" stroke="#60d020" stroke-width="2.2"/><circle cx="10" cy="14.5" r="1.3" fill="#60d020"/></svg>
<svg class="a" style="left:1036px;top:742px" width="14" height="9" viewBox="0 0 14 9"><path d="M1 8l6-6 6 6" fill="none" stroke="#fff" stroke-width="1.4"/></svg>
<svg class="a" style="left:1082px;top:741px" width="16" height="12" viewBox="0 0 16 12"><rect x="3" y="3" width="12" height="8" fill="none" stroke="#fff" stroke-width="1.2"/><rect x="4.5" y="4.5" width="7" height="5" fill="#fff"/><path d="M0 5h3M1 3v4" stroke="#fff"/></svg>
<svg class="a" style="left:1108px;top:740px" width="15" height="15" viewBox="0 0 15 15"><path d="M1 14a13 13 0 0 1 13-13M4 14a10 10 0 0 1 10-10M7 14a7 7 0 0 1 7-7M10 14a4 4 0 0 1 4-4" fill="none" stroke="#ddd" stroke-width="1.2"/><circle cx="12" cy="12" r="1.5" fill="#ddd"/></svg>
<svg class="a" style="left:1129px;top:740px" width="17" height="16" viewBox="0 0 17 16"><path d="M1 5h3l5-4v14l-5-4H1z" fill="none" stroke="#fff" stroke-width="1.2"/><path d="M11 5q2 3 0 6M13 3q4 5 0 10" fill="none" stroke="#ddd" stroke-width="1.1"/></svg>
<svg class="a" style="left:1154px;top:740px" width="23" height="14" viewBox="0 0 23 14"><rect x=".5" y=".5" width="22" height="13" fill="none" stroke="#fff"/><path d="M3 4h17M3 7h17M6 10h11" stroke="#fff" stroke-dasharray="1.5 1"/></svg>
<div class="t " style="left:1187px;top:740px;color:#fff;font-size:13px;">英</div>
<svg class="a" style="left:1213px;top:740px" width="17" height="17" viewBox="0 0 17 17"><path d="M2 3q2-3 11-3l4 2-2 14q-7 2-13 0z" fill="#f05a22"/><text x="9" y="13" font-size="12" font-weight="bold" fill="#fff" text-anchor="middle" font-family="Liberation Sans">S</text></svg>
<div class="t " style="left:1261px;top:730px;color:#fff;font-size:13px;">11:28</div>
<div class="t " style="left:1246px;top:749px;color:#fff;font-size:13px;">2018/6/24</div>
<svg class="a" style="left:1324px;top:740px" width="18" height="16" viewBox="0 0 18 16"><path d="M1 1h16v11H8l-4 3v-3H1z" fill="none" stroke="#fff" stroke-width="1.2"/></svg>
</body></html>
